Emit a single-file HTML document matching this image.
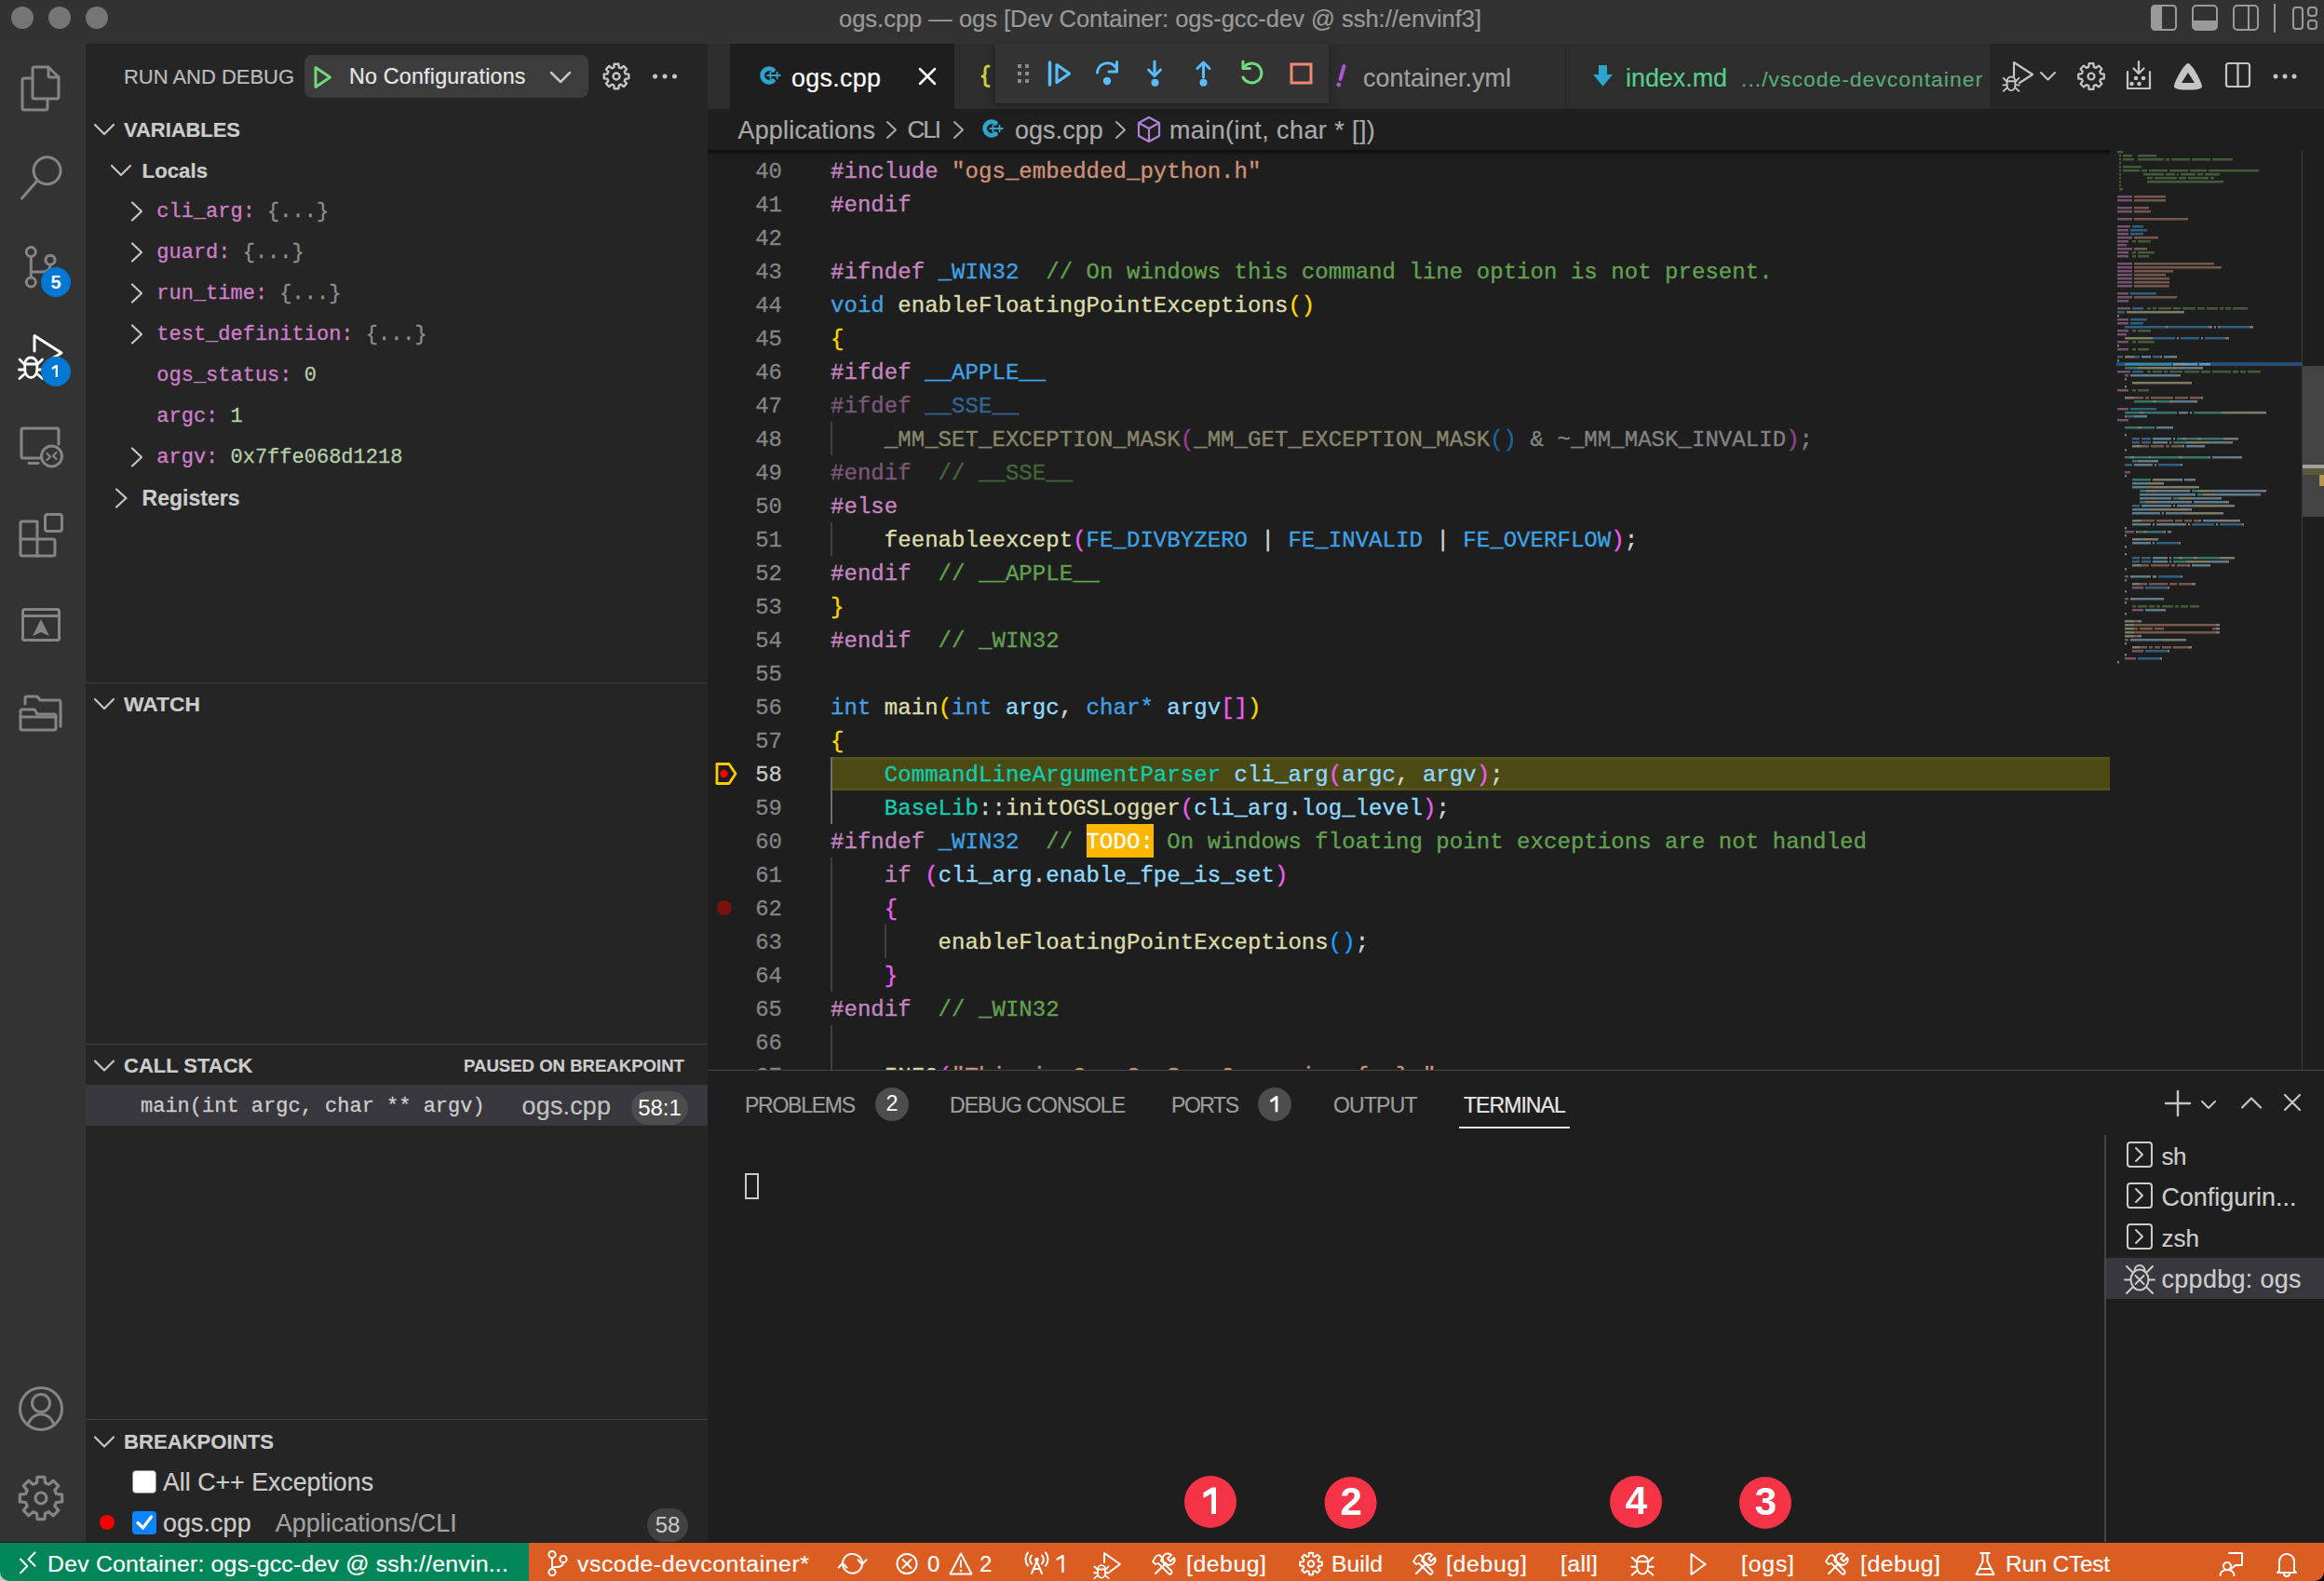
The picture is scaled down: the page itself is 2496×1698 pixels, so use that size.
<!DOCTYPE html><html><head><meta charset="utf-8"><style>html,body{margin:0;padding:0;}body{width:2496px;height:1698px;position:relative;overflow:hidden;background:#1e1e1e;font-family:"Liberation Sans",sans-serif;}</style></head><body><div style="position:absolute;left:0px;top:0px;width:2496px;height:47px;background:#323232;"></div>
<div style="position:absolute;left:901px;top:1.40px;height:38px;line-height:38px;font-family:'Liberation Sans', sans-serif;font-size:25.50px;font-weight:400;color:#9a9a9a;white-space:pre;letter-spacing:-0.010px;-webkit-text-stroke:0.2px;">ogs.cpp — ogs [Dev Container: ogs-gcc-dev @ ssh://envinf3]</div>
<div style="position:absolute;left:0px;top:47px;width:92px;height:1610px;background:#333333;"></div>
<div style="position:absolute;left:92px;top:47px;width:668px;height:1610px;background:#252526;"></div>
<div style="position:absolute;left:133px;top:65.70px;height:33px;line-height:33px;font-family:'Liberation Sans', sans-serif;font-size:22.00px;font-weight:400;color:#bbbbbb;white-space:pre;letter-spacing:-0.030px;-webkit-text-stroke:0.2px;">RUN AND DEBUG</div>
<div style="position:absolute;left:327px;top:59px;width:305px;height:46px;background:#3c3c3c;border-radius:8px;"></div>
<div style="position:absolute;left:375px;top:65.40px;height:35px;line-height:35px;font-family:'Liberation Sans', sans-serif;font-size:23.29px;font-weight:400;color:#e6e6e6;white-space:pre;letter-spacing:0.194px;-webkit-text-stroke:0.2px;">No Configurations</div>
<div style="position:absolute;left:133px;top:122.50px;height:33px;line-height:33px;font-family:'Liberation Sans', sans-serif;font-size:22.00px;font-weight:700;color:#cccccc;white-space:pre;letter-spacing:-0.062px;-webkit-text-stroke:0.2px;">VARIABLES</div>
<div style="position:absolute;left:152.6px;top:166.50px;height:33px;line-height:33px;font-family:'Liberation Sans', sans-serif;font-size:22.22px;font-weight:700;color:#cccccc;white-space:pre;-webkit-text-stroke:0.2px;">Locals</div>
<div style="position:absolute;left:168.3px;top:211.00px;height:33px;line-height:33px;font-family:'Liberation Mono', monospace;font-size:22px;font-weight:400;white-space:pre;-webkit-text-stroke:0.3px;"><span style="color:#cf7fca">cli_arg:</span><span style="color:#8f8f8f"> {...}</span></div>
<div style="position:absolute;left:168.3px;top:255.00px;height:33px;line-height:33px;font-family:'Liberation Mono', monospace;font-size:22px;font-weight:400;white-space:pre;-webkit-text-stroke:0.3px;"><span style="color:#cf7fca">guard:</span><span style="color:#8f8f8f"> {...}</span></div>
<div style="position:absolute;left:168.3px;top:299.00px;height:33px;line-height:33px;font-family:'Liberation Mono', monospace;font-size:22px;font-weight:400;white-space:pre;-webkit-text-stroke:0.3px;"><span style="color:#cf7fca">run_time:</span><span style="color:#8f8f8f"> {...}</span></div>
<div style="position:absolute;left:168.3px;top:343.00px;height:33px;line-height:33px;font-family:'Liberation Mono', monospace;font-size:22px;font-weight:400;white-space:pre;-webkit-text-stroke:0.3px;"><span style="color:#cf7fca">test_definition:</span><span style="color:#8f8f8f"> {...}</span></div>
<div style="position:absolute;left:168.3px;top:387.00px;height:33px;line-height:33px;font-family:'Liberation Mono', monospace;font-size:22px;font-weight:400;white-space:pre;-webkit-text-stroke:0.3px;"><span style="color:#cf7fca">ogs_status:</span><span style="color:#b5cea8"> 0</span></div>
<div style="position:absolute;left:168.3px;top:431.00px;height:33px;line-height:33px;font-family:'Liberation Mono', monospace;font-size:22px;font-weight:400;white-space:pre;-webkit-text-stroke:0.3px;"><span style="color:#cf7fca">argc:</span><span style="color:#b5cea8"> 1</span></div>
<div style="position:absolute;left:168.3px;top:475.00px;height:33px;line-height:33px;font-family:'Liberation Mono', monospace;font-size:22px;font-weight:400;white-space:pre;-webkit-text-stroke:0.3px;"><span style="color:#cf7fca">argv:</span><span style="color:#b5cea8"> 0x7ffe068d1218</span></div>
<div style="position:absolute;left:152.6px;top:518.00px;height:34px;line-height:34px;font-family:'Liberation Sans', sans-serif;font-size:23.00px;font-weight:700;color:#cccccc;white-space:pre;-webkit-text-stroke:0.2px;">Registers</div>
<div style="position:absolute;left:92px;top:733px;width:668px;height:1px;background:#3f3f3f;"></div>
<div style="position:absolute;left:133px;top:739.00px;height:34px;line-height:34px;font-family:'Liberation Sans', sans-serif;font-size:22.77px;font-weight:700;color:#cccccc;white-space:pre;letter-spacing:0.053px;-webkit-text-stroke:0.2px;">WATCH</div>
<div style="position:absolute;left:92px;top:1121px;width:668px;height:1px;background:#3f3f3f;"></div>
<div style="position:absolute;left:133px;top:1128.00px;height:33px;line-height:33px;font-family:'Liberation Sans', sans-serif;font-size:22.00px;font-weight:700;color:#cccccc;white-space:pre;letter-spacing:-0.012px;-webkit-text-stroke:0.2px;">CALL STACK</div>
<div style="position:absolute;left:498px;top:1130.70px;height:28px;line-height:28px;font-family:'Liberation Sans', sans-serif;font-size:18.60px;font-weight:700;color:#cccccc;white-space:pre;letter-spacing:-0.018px;-webkit-text-stroke:0.2px;">PAUSED ON BREAKPOINT</div>
<div style="position:absolute;left:92px;top:1165px;width:668px;height:44px;background:#37373d;"></div>
<div style="position:absolute;left:151px;top:1171.50px;height:33px;line-height:33px;font-family:'Liberation Mono', monospace;font-size:22.00px;font-weight:400;color:#cccccc;white-space:pre;-webkit-text-stroke:0.3px;">main(int argc, char ** argv)</div>
<div style="position:absolute;left:560.6px;top:1168.00px;height:40px;line-height:40px;font-family:'Liberation Sans', sans-serif;font-size:26.91px;font-weight:400;color:#c2c2c2;white-space:pre;letter-spacing:0.193px;-webkit-text-stroke:0.2px;">ogs.cpp</div>
<div style="position:absolute;left:678px;top:1172px;width:61px;height:36px;background:#4d4d4d;border-radius:18px;"></div>
<div style="position:absolute;left:678px;width:61px;text-align:center;top:1172.00px;height:36px;line-height:36px;font-family:'Liberation Sans', sans-serif;font-size:24px;font-weight:400;color:#ffffff;white-space:pre;">58:1</div>
<div style="position:absolute;left:92px;top:1524px;width:668px;height:1px;background:#3f3f3f;"></div>
<div style="position:absolute;left:133px;top:1532.00px;height:33px;line-height:33px;font-family:'Liberation Sans', sans-serif;font-size:22.12px;font-weight:700;color:#cccccc;white-space:pre;-webkit-text-stroke:0.2px;">BREAKPOINTS</div>
<div style="position:absolute;left:142px;top:1579px;width:26px;height:25px;background:#ffffff;border-radius:4px;box-sizing:border-box;border:1.5px solid #8a8a8a;"></div>
<div style="position:absolute;left:175px;top:1572.00px;height:40px;line-height:40px;font-family:'Liberation Sans', sans-serif;font-size:26.75px;font-weight:400;color:#cccccc;white-space:pre;-webkit-text-stroke:0.2px;">All C++ Exceptions</div>
<div style="position:absolute;left:142px;top:1623px;width:26px;height:25px;background:#0a84ff;border-radius:4px;"></div>
<div style="position:absolute;left:175px;top:1616.00px;height:40px;line-height:40px;font-family:'Liberation Sans', sans-serif;font-size:26.91px;font-weight:400;color:#cccccc;white-space:pre;letter-spacing:0.059px;-webkit-text-stroke:0.2px;">ogs.cpp</div>
<div style="position:absolute;left:295.7px;top:1616.00px;height:40px;line-height:40px;font-family:'Liberation Sans', sans-serif;font-size:26.91px;font-weight:400;color:#a0a0a0;white-space:pre;letter-spacing:0.037px;-webkit-text-stroke:0.2px;">Applications/CLI</div>
<div style="position:absolute;left:695px;top:1620px;width:44px;height:36px;background:#414141;border-radius:18px;"></div>
<div style="position:absolute;left:695px;width:44px;text-align:center;top:1620.00px;height:36px;line-height:36px;font-family:'Liberation Sans', sans-serif;font-size:24px;font-weight:400;color:#cccccc;white-space:pre;">58</div>
<div style="position:absolute;left:760px;top:47px;width:1736px;height:70px;background:#252526;"></div>
<div style="position:absolute;left:760px;top:47px;width:24px;height:70px;background:#2d2d2d;"></div>
<div style="position:absolute;left:784px;top:47px;width:241px;height:70px;background:#1e1e1e;"></div>
<div style="position:absolute;left:850px;top:63.50px;height:40px;line-height:40px;font-family:'Liberation Sans', sans-serif;font-size:26.91px;font-weight:400;color:#ffffff;white-space:pre;letter-spacing:0.293px;-webkit-text-stroke:0.2px;">ogs.cpp</div>
<div style="position:absolute;left:1025px;top:47px;width:385px;height:70px;background:#2d2d2d;"></div>
<div style="position:absolute;left:1410px;top:47px;width:271px;height:70px;background:#2d2d2d;"></div>
<div style="position:absolute;left:1464px;top:63.50px;height:40px;line-height:40px;font-family:'Liberation Sans', sans-serif;font-size:26.91px;font-weight:400;color:#a0a0a0;white-space:pre;letter-spacing:0.039px;-webkit-text-stroke:0.2px;">container.yml</div>
<div style="position:absolute;left:1682px;top:47px;width:455px;height:70px;background:#2d2d2d;"></div>
<div style="position:absolute;left:1746px;top:63.50px;height:40px;line-height:40px;font-family:'Liberation Sans', sans-serif;font-size:26.86px;font-weight:400;color:#58cc8c;white-space:pre;-webkit-text-stroke:0.2px;">index.md</div>
<div style="position:absolute;left:1870px;top:67.50px;height:34px;line-height:34px;font-family:'Liberation Sans', sans-serif;font-size:22.77px;font-weight:400;color:#5aa87a;white-space:pre;letter-spacing:1.073px;-webkit-text-stroke:0.2px;">.../vscode-devcontainer</div>
<div style="position:absolute;left:760px;top:117px;width:1736px;height:44px;background:#1e1e1e;"></div>
<div style="position:absolute;left:792.5px;top:119.50px;height:40px;line-height:40px;font-family:'Liberation Sans', sans-serif;font-size:26.91px;font-weight:400;color:#a9a9a9;white-space:pre;letter-spacing:0.219px;-webkit-text-stroke:0.2px;">Applications</div>
<div style="position:absolute;left:974.5px;top:120.00px;height:39px;line-height:39px;font-family:'Liberation Sans', sans-serif;font-size:26.00px;font-weight:400;color:#a9a9a9;white-space:pre;letter-spacing:-1.979px;-webkit-text-stroke:0.2px;">CLI</div>
<div style="position:absolute;left:1090px;top:119.50px;height:40px;line-height:40px;font-family:'Liberation Sans', sans-serif;font-size:26.91px;font-weight:400;color:#a9a9a9;white-space:pre;letter-spacing:0.076px;-webkit-text-stroke:0.2px;">ogs.cpp</div>
<div style="position:absolute;left:1256px;top:119.50px;height:40px;line-height:40px;font-family:'Liberation Sans', sans-serif;font-size:26.91px;font-weight:400;color:#a9a9a9;white-space:pre;letter-spacing:0.445px;-webkit-text-stroke:0.2px;">main(int, char * [])</div>
<div style="position:absolute;left:1069px;top:47px;width:358px;height:64px;background:#333333;box-shadow:0 2px 8px rgba(0,0,0,0.36);"></div>
<div style="position:absolute;left:760px;top:1149px;width:1736px;height:1px;background:#454545;"></div>
<div style="position:absolute;left:760px;top:1150px;width:1736px;height:507px;background:#1e1e1e;"></div>
<div style="position:absolute;left:800px;top:1169.50px;height:34px;line-height:34px;font-family:'Liberation Sans', sans-serif;font-size:23.00px;font-weight:400;color:#9d9d9d;white-space:pre;letter-spacing:-1.259px;-webkit-text-stroke:0.2px;">PROBLEMS</div>
<div style="position:absolute;left:940px;top:1168px;width:36px;height:36px;background:#4d4d4d;border-radius:18px;"></div>
<div style="position:absolute;left:940px;width:36px;text-align:center;top:1168.00px;height:35px;line-height:35px;font-family:'Liberation Sans', sans-serif;font-size:23.5px;font-weight:400;color:#ffffff;white-space:pre;">2</div>
<div style="position:absolute;left:1020px;top:1169.50px;height:34px;line-height:34px;font-family:'Liberation Sans', sans-serif;font-size:23.00px;font-weight:400;color:#9d9d9d;white-space:pre;letter-spacing:-0.971px;-webkit-text-stroke:0.2px;">DEBUG CONSOLE</div>
<div style="position:absolute;left:1258px;top:1169.50px;height:34px;line-height:34px;font-family:'Liberation Sans', sans-serif;font-size:23.00px;font-weight:400;color:#9d9d9d;white-space:pre;letter-spacing:-1.454px;-webkit-text-stroke:0.2px;">PORTS</div>
<div style="position:absolute;left:1351px;top:1168px;width:36px;height:36px;background:#4d4d4d;border-radius:18px;"></div>
<div style="position:absolute;left:1432px;top:1169.50px;height:34px;line-height:34px;font-family:'Liberation Sans', sans-serif;font-size:23.00px;font-weight:400;color:#9d9d9d;white-space:pre;letter-spacing:-0.810px;-webkit-text-stroke:0.2px;">OUTPUT</div>
<div style="position:absolute;left:1572px;top:1169.50px;height:34px;line-height:34px;font-family:'Liberation Sans', sans-serif;font-size:23.00px;font-weight:400;color:#e7e7e7;white-space:pre;letter-spacing:-0.941px;-webkit-text-stroke:0.2px;">TERMINAL</div>
<div style="position:absolute;left:1567px;top:1210px;width:119px;height:2px;background:#e7e7e7;"></div>
<div style="position:absolute;left:2260px;top:1219px;width:2px;height:438px;background:#454545;"></div>
<div style="position:absolute;left:2262px;top:1351px;width:234px;height:44px;background:#37373d;"></div>
<div style="position:absolute;left:2321.5px;top:1222.50px;height:39px;line-height:39px;font-family:'Liberation Sans', sans-serif;font-size:26.00px;font-weight:400;color:#cccccc;white-space:pre;letter-spacing:-0.458px;-webkit-text-stroke:0.2px;">sh</div>
<div style="position:absolute;left:2321.5px;top:1266.00px;height:40px;line-height:40px;font-family:'Liberation Sans', sans-serif;font-size:26.88px;font-weight:400;color:#cccccc;white-space:pre;-webkit-text-stroke:0.2px;">Configurin...</div>
<div style="position:absolute;left:2321.5px;top:1310.50px;height:39px;line-height:39px;font-family:'Liberation Sans', sans-serif;font-size:26.03px;font-weight:400;color:#cccccc;white-space:pre;-webkit-text-stroke:0.2px;">zsh</div>
<div style="position:absolute;left:2321.5px;top:1354.00px;height:40px;line-height:40px;font-family:'Liberation Sans', sans-serif;font-size:26.91px;font-weight:400;color:#cccccc;white-space:pre;letter-spacing:0.339px;-webkit-text-stroke:0.2px;">cppdbg: ogs</div>
<div style="position:absolute;left:0px;top:1656px;width:2496px;height:1px;background:#1b1f23;"></div>
<div style="position:absolute;left:0px;top:1657px;width:2496px;height:41px;background:#dc5d22;"></div>
<div style="position:absolute;left:0px;top:1657px;width:568px;height:41px;background:#008659;"></div>
<div style="position:absolute;left:51px;top:1661.20px;height:37px;line-height:37px;font-family:'Liberation Sans', sans-serif;font-size:24.84px;font-weight:400;color:#ffffff;white-space:pre;letter-spacing:0.207px;-webkit-text-stroke:0.2px;">Dev Container: ogs-gcc-dev @ ssh://envin...</div>
<div style="position:absolute;left:620px;top:1661.20px;height:37px;line-height:37px;font-family:'Liberation Sans', sans-serif;font-size:24.84px;font-weight:400;color:#ffffff;white-space:pre;letter-spacing:0.533px;-webkit-text-stroke:0.2px;">vscode-devcontainer*</div>
<div style="position:absolute;left:996px;top:1661.70px;height:36px;line-height:36px;font-family:'Liberation Sans', sans-serif;font-size:24.00px;font-weight:400;color:#ffffff;white-space:pre;-webkit-text-stroke:0.2px;">0</div>
<div style="position:absolute;left:1052px;top:1661.70px;height:36px;line-height:36px;font-family:'Liberation Sans', sans-serif;font-size:24.00px;font-weight:400;color:#ffffff;white-space:pre;-webkit-text-stroke:0.2px;">2</div>
<div style="position:absolute;left:1274px;top:1661.20px;height:37px;line-height:37px;font-family:'Liberation Sans', sans-serif;font-size:24.84px;font-weight:400;color:#ffffff;white-space:pre;letter-spacing:0.522px;-webkit-text-stroke:0.2px;">[debug]</div>
<div style="position:absolute;left:1430px;top:1661.20px;height:37px;line-height:37px;font-family:'Liberation Sans', sans-serif;font-size:24.73px;font-weight:400;color:#ffffff;white-space:pre;-webkit-text-stroke:0.2px;">Build</div>
<div style="position:absolute;left:1553px;top:1661.20px;height:37px;line-height:37px;font-family:'Liberation Sans', sans-serif;font-size:24.84px;font-weight:400;color:#ffffff;white-space:pre;letter-spacing:0.689px;-webkit-text-stroke:0.2px;">[debug]</div>
<div style="position:absolute;left:1676px;top:1661.20px;height:37px;line-height:37px;font-family:'Liberation Sans', sans-serif;font-size:24.84px;font-weight:400;color:#ffffff;white-space:pre;letter-spacing:0.337px;-webkit-text-stroke:0.2px;">[all]</div>
<div style="position:absolute;left:1870px;top:1661.20px;height:37px;line-height:37px;font-family:'Liberation Sans', sans-serif;font-size:24.84px;font-weight:400;color:#ffffff;white-space:pre;letter-spacing:0.788px;-webkit-text-stroke:0.2px;">[ogs]</div>
<div style="position:absolute;left:1998px;top:1661.20px;height:37px;line-height:37px;font-family:'Liberation Sans', sans-serif;font-size:24.84px;font-weight:400;color:#ffffff;white-space:pre;letter-spacing:0.522px;-webkit-text-stroke:0.2px;">[debug]</div>
<div style="position:absolute;left:2154px;top:1661.20px;height:37px;line-height:37px;font-family:'Liberation Sans', sans-serif;font-size:24.50px;font-weight:400;color:#ffffff;white-space:pre;letter-spacing:-0.297px;-webkit-text-stroke:0.2px;">Run CTest</div>
<div style="position:absolute;left:760px;top:161px;width:1736px;height:988px;background:#1e1e1e;"></div>
<div style="position:absolute;left:892px;top:813px;width:1374px;height:36px;background:#4b4a12;box-sizing:border-box;border-top:3px solid #55531c;border-bottom:3px solid #55531c;"></div>
<div style="position:absolute;left:892px;top:453px;width:2px;height:36px;background:#404040;"></div>
<div style="position:absolute;left:892px;top:561px;width:2px;height:36px;background:#404040;"></div>
<div style="position:absolute;left:892px;top:813px;width:2px;height:72px;background:#707070;"></div>
<div style="position:absolute;left:892px;top:921px;width:2px;height:144px;background:#404040;"></div>
<div style="position:absolute;left:950px;top:993px;width:2px;height:36px;background:#404040;"></div>
<div style="position:absolute;left:892px;top:1101px;width:2px;height:48px;background:#404040;"></div>
<div style="position:absolute;left:1166.5px;top:885px;width:72.5px;height:36px;background:#fdb700;"></div>
<div style="position:absolute;left:760px;top:161px;width:1506px;height:988px;overflow:hidden;">
<div style="position:absolute;left:51.2px;top:6.20px;height:36px;line-height:36px;font-family:'Liberation Mono',monospace;font-size:24px;color:#858585;white-space:pre;-webkit-text-stroke:0.3px">40</div>
<div style="position:absolute;left:132px;top:6.20px;height:36px;line-height:36px;font-family:'Liberation Mono',monospace;font-size:24px;white-space:pre;letter-spacing:0.05px;-webkit-text-stroke:0.35px;"><span style="color:#c586c0">#include </span><span style="color:#ce9178">"ogs_embedded_python.h"</span></div>
<div style="position:absolute;left:51.2px;top:42.20px;height:36px;line-height:36px;font-family:'Liberation Mono',monospace;font-size:24px;color:#858585;white-space:pre;-webkit-text-stroke:0.3px">41</div>
<div style="position:absolute;left:132px;top:42.20px;height:36px;line-height:36px;font-family:'Liberation Mono',monospace;font-size:24px;white-space:pre;letter-spacing:0.05px;-webkit-text-stroke:0.35px;"><span style="color:#c586c0">#endif</span></div>
<div style="position:absolute;left:51.2px;top:78.20px;height:36px;line-height:36px;font-family:'Liberation Mono',monospace;font-size:24px;color:#858585;white-space:pre;-webkit-text-stroke:0.3px">42</div>
<div style="position:absolute;left:51.2px;top:114.20px;height:36px;line-height:36px;font-family:'Liberation Mono',monospace;font-size:24px;color:#858585;white-space:pre;-webkit-text-stroke:0.3px">43</div>
<div style="position:absolute;left:132px;top:114.20px;height:36px;line-height:36px;font-family:'Liberation Mono',monospace;font-size:24px;white-space:pre;letter-spacing:0.05px;-webkit-text-stroke:0.35px;"><span style="color:#c586c0">#ifndef </span><span style="color:#3ea2e4">_WIN32</span><span style="color:#62a150">  // On windows this command line option is not present.</span></div>
<div style="position:absolute;left:51.2px;top:150.20px;height:36px;line-height:36px;font-family:'Liberation Mono',monospace;font-size:24px;color:#858585;white-space:pre;-webkit-text-stroke:0.3px">44</div>
<div style="position:absolute;left:132px;top:150.20px;height:36px;line-height:36px;font-family:'Liberation Mono',monospace;font-size:24px;white-space:pre;letter-spacing:0.05px;-webkit-text-stroke:0.35px;"><span style="color:#44a0e4">void </span><span style="color:#dcdcaa">enableFloatingPointExceptions</span><span style="color:#ffd700">()</span></div>
<div style="position:absolute;left:51.2px;top:186.20px;height:36px;line-height:36px;font-family:'Liberation Mono',monospace;font-size:24px;color:#858585;white-space:pre;-webkit-text-stroke:0.3px">45</div>
<div style="position:absolute;left:132px;top:186.20px;height:36px;line-height:36px;font-family:'Liberation Mono',monospace;font-size:24px;white-space:pre;letter-spacing:0.05px;-webkit-text-stroke:0.35px;"><span style="color:#ffd700">{</span></div>
<div style="position:absolute;left:51.2px;top:222.20px;height:36px;line-height:36px;font-family:'Liberation Mono',monospace;font-size:24px;color:#858585;white-space:pre;-webkit-text-stroke:0.3px">46</div>
<div style="position:absolute;left:132px;top:222.20px;height:36px;line-height:36px;font-family:'Liberation Mono',monospace;font-size:24px;white-space:pre;letter-spacing:0.05px;-webkit-text-stroke:0.35px;"><span style="color:#c586c0">#ifdef </span><span style="color:#3ea2e4">__APPLE__</span></div>
<div style="position:absolute;left:51.2px;top:258.20px;height:36px;line-height:36px;font-family:'Liberation Mono',monospace;font-size:24px;color:#858585;white-space:pre;-webkit-text-stroke:0.3px">47</div>
<div style="position:absolute;left:132px;top:258.20px;height:36px;line-height:36px;font-family:'Liberation Mono',monospace;font-size:24px;white-space:pre;letter-spacing:0.05px;-webkit-text-stroke:0.35px;opacity:0.55;"><span style="color:#c586c0">#ifdef </span><span style="color:#3ea2e4">__SSE__</span></div>
<div style="position:absolute;left:51.2px;top:294.20px;height:36px;line-height:36px;font-family:'Liberation Mono',monospace;font-size:24px;color:#858585;white-space:pre;-webkit-text-stroke:0.3px">48</div>
<div style="position:absolute;left:132px;top:294.20px;height:36px;line-height:36px;font-family:'Liberation Mono',monospace;font-size:24px;white-space:pre;letter-spacing:0.05px;-webkit-text-stroke:0.35px;opacity:0.55;"><span style="color:#dcdcaa">    _MM_SET_EXCEPTION_MASK</span><span style="color:#ee5fec">(</span><span style="color:#dcdcaa">_MM_GET_EXCEPTION_MASK</span><span style="color:#179fff">()</span><span style="color:#d4d4d4"> &amp; ~_MM_MASK_INVALID</span><span style="color:#ee5fec">)</span><span style="color:#d4d4d4">;</span></div>
<div style="position:absolute;left:51.2px;top:330.20px;height:36px;line-height:36px;font-family:'Liberation Mono',monospace;font-size:24px;color:#858585;white-space:pre;-webkit-text-stroke:0.3px">49</div>
<div style="position:absolute;left:132px;top:330.20px;height:36px;line-height:36px;font-family:'Liberation Mono',monospace;font-size:24px;white-space:pre;letter-spacing:0.05px;-webkit-text-stroke:0.35px;opacity:0.55;"><span style="color:#c586c0">#endif</span><span style="color:#62a150">  // __SSE__</span></div>
<div style="position:absolute;left:51.2px;top:366.20px;height:36px;line-height:36px;font-family:'Liberation Mono',monospace;font-size:24px;color:#858585;white-space:pre;-webkit-text-stroke:0.3px">50</div>
<div style="position:absolute;left:132px;top:366.20px;height:36px;line-height:36px;font-family:'Liberation Mono',monospace;font-size:24px;white-space:pre;letter-spacing:0.05px;-webkit-text-stroke:0.35px;"><span style="color:#c586c0">#else</span></div>
<div style="position:absolute;left:51.2px;top:402.20px;height:36px;line-height:36px;font-family:'Liberation Mono',monospace;font-size:24px;color:#858585;white-space:pre;-webkit-text-stroke:0.3px">51</div>
<div style="position:absolute;left:132px;top:402.20px;height:36px;line-height:36px;font-family:'Liberation Mono',monospace;font-size:24px;white-space:pre;letter-spacing:0.05px;-webkit-text-stroke:0.35px;"><span style="color:#dcdcaa">    feenableexcept</span><span style="color:#ee5fec">(</span><span style="color:#3ea2e4">FE_DIVBYZERO</span><span style="color:#d4d4d4"> | </span><span style="color:#3ea2e4">FE_INVALID</span><span style="color:#d4d4d4"> | </span><span style="color:#3ea2e4">FE_OVERFLOW</span><span style="color:#ee5fec">)</span><span style="color:#d4d4d4">;</span></div>
<div style="position:absolute;left:51.2px;top:438.20px;height:36px;line-height:36px;font-family:'Liberation Mono',monospace;font-size:24px;color:#858585;white-space:pre;-webkit-text-stroke:0.3px">52</div>
<div style="position:absolute;left:132px;top:438.20px;height:36px;line-height:36px;font-family:'Liberation Mono',monospace;font-size:24px;white-space:pre;letter-spacing:0.05px;-webkit-text-stroke:0.35px;"><span style="color:#c586c0">#endif</span><span style="color:#62a150">  // __APPLE__</span></div>
<div style="position:absolute;left:51.2px;top:474.20px;height:36px;line-height:36px;font-family:'Liberation Mono',monospace;font-size:24px;color:#858585;white-space:pre;-webkit-text-stroke:0.3px">53</div>
<div style="position:absolute;left:132px;top:474.20px;height:36px;line-height:36px;font-family:'Liberation Mono',monospace;font-size:24px;white-space:pre;letter-spacing:0.05px;-webkit-text-stroke:0.35px;"><span style="color:#ffd700">}</span></div>
<div style="position:absolute;left:51.2px;top:510.20px;height:36px;line-height:36px;font-family:'Liberation Mono',monospace;font-size:24px;color:#858585;white-space:pre;-webkit-text-stroke:0.3px">54</div>
<div style="position:absolute;left:132px;top:510.20px;height:36px;line-height:36px;font-family:'Liberation Mono',monospace;font-size:24px;white-space:pre;letter-spacing:0.05px;-webkit-text-stroke:0.35px;"><span style="color:#c586c0">#endif</span><span style="color:#62a150">  // _WIN32</span></div>
<div style="position:absolute;left:51.2px;top:546.20px;height:36px;line-height:36px;font-family:'Liberation Mono',monospace;font-size:24px;color:#858585;white-space:pre;-webkit-text-stroke:0.3px">55</div>
<div style="position:absolute;left:51.2px;top:582.20px;height:36px;line-height:36px;font-family:'Liberation Mono',monospace;font-size:24px;color:#858585;white-space:pre;-webkit-text-stroke:0.3px">56</div>
<div style="position:absolute;left:132px;top:582.20px;height:36px;line-height:36px;font-family:'Liberation Mono',monospace;font-size:24px;white-space:pre;letter-spacing:0.05px;-webkit-text-stroke:0.35px;"><span style="color:#44a0e4">int </span><span style="color:#dcdcaa">main</span><span style="color:#ffd700">(</span><span style="color:#44a0e4">int </span><span style="color:#8fd9ff">argc</span><span style="color:#d4d4d4">, </span><span style="color:#44a0e4">char</span><span style="color:#44a0e4">*</span><span style="color:#8fd9ff"> argv</span><span style="color:#ee5fec">[]</span><span style="color:#ffd700">)</span></div>
<div style="position:absolute;left:51.2px;top:618.20px;height:36px;line-height:36px;font-family:'Liberation Mono',monospace;font-size:24px;color:#858585;white-space:pre;-webkit-text-stroke:0.3px">57</div>
<div style="position:absolute;left:132px;top:618.20px;height:36px;line-height:36px;font-family:'Liberation Mono',monospace;font-size:24px;white-space:pre;letter-spacing:0.05px;-webkit-text-stroke:0.35px;"><span style="color:#ffd700">{</span></div>
<div style="position:absolute;left:51.2px;top:654.20px;height:36px;line-height:36px;font-family:'Liberation Mono',monospace;font-size:24px;color:#c6c6c6;white-space:pre;-webkit-text-stroke:0.3px">58</div>
<div style="position:absolute;left:132px;top:654.20px;height:36px;line-height:36px;font-family:'Liberation Mono',monospace;font-size:24px;white-space:pre;letter-spacing:0.05px;-webkit-text-stroke:0.35px;"><span style="color:#10cdb0">    CommandLineArgumentParser </span><span style="color:#8fd9ff">cli_arg</span><span style="color:#ee5fec">(</span><span style="color:#8fd9ff">argc</span><span style="color:#d4d4d4">, </span><span style="color:#8fd9ff">argv</span><span style="color:#ee5fec">)</span><span style="color:#d4d4d4">;</span></div>
<div style="position:absolute;left:51.2px;top:690.20px;height:36px;line-height:36px;font-family:'Liberation Mono',monospace;font-size:24px;color:#858585;white-space:pre;-webkit-text-stroke:0.3px">59</div>
<div style="position:absolute;left:132px;top:690.20px;height:36px;line-height:36px;font-family:'Liberation Mono',monospace;font-size:24px;white-space:pre;letter-spacing:0.05px;-webkit-text-stroke:0.35px;"><span style="color:#10cdb0">    BaseLib</span><span style="color:#d4d4d4">::</span><span style="color:#dcdcaa">initOGSLogger</span><span style="color:#ee5fec">(</span><span style="color:#8fd9ff">cli_arg</span><span style="color:#d4d4d4">.</span><span style="color:#8fd9ff">log_level</span><span style="color:#ee5fec">)</span><span style="color:#d4d4d4">;</span></div>
<div style="position:absolute;left:51.2px;top:726.20px;height:36px;line-height:36px;font-family:'Liberation Mono',monospace;font-size:24px;color:#858585;white-space:pre;-webkit-text-stroke:0.3px">60</div>
<div style="position:absolute;left:132px;top:726.20px;height:36px;line-height:36px;font-family:'Liberation Mono',monospace;font-size:24px;white-space:pre;letter-spacing:0.05px;-webkit-text-stroke:0.35px;"><span style="color:#c586c0">#ifndef </span><span style="color:#3ea2e4">_WIN32</span><span style="color:#62a150">  // </span><span style="color:#ffffff">TODO:</span><span style="color:#62a150"> On windows floating point exceptions are not handled</span></div>
<div style="position:absolute;left:51.2px;top:762.20px;height:36px;line-height:36px;font-family:'Liberation Mono',monospace;font-size:24px;color:#858585;white-space:pre;-webkit-text-stroke:0.3px">61</div>
<div style="position:absolute;left:132px;top:762.20px;height:36px;line-height:36px;font-family:'Liberation Mono',monospace;font-size:24px;white-space:pre;letter-spacing:0.05px;-webkit-text-stroke:0.35px;"><span style="color:#c586c0">    if </span><span style="color:#ee5fec">(</span><span style="color:#8fd9ff">cli_arg</span><span style="color:#d4d4d4">.</span><span style="color:#8fd9ff">enable_fpe_is_set</span><span style="color:#ee5fec">)</span></div>
<div style="position:absolute;left:51.2px;top:798.20px;height:36px;line-height:36px;font-family:'Liberation Mono',monospace;font-size:24px;color:#858585;white-space:pre;-webkit-text-stroke:0.3px">62</div>
<div style="position:absolute;left:132px;top:798.20px;height:36px;line-height:36px;font-family:'Liberation Mono',monospace;font-size:24px;white-space:pre;letter-spacing:0.05px;-webkit-text-stroke:0.35px;"><span style="color:#ee5fec">    {</span></div>
<div style="position:absolute;left:51.2px;top:834.20px;height:36px;line-height:36px;font-family:'Liberation Mono',monospace;font-size:24px;color:#858585;white-space:pre;-webkit-text-stroke:0.3px">63</div>
<div style="position:absolute;left:132px;top:834.20px;height:36px;line-height:36px;font-family:'Liberation Mono',monospace;font-size:24px;white-space:pre;letter-spacing:0.05px;-webkit-text-stroke:0.35px;"><span style="color:#dcdcaa">        enableFloatingPointExceptions</span><span style="color:#179fff">()</span><span style="color:#d4d4d4">;</span></div>
<div style="position:absolute;left:51.2px;top:870.20px;height:36px;line-height:36px;font-family:'Liberation Mono',monospace;font-size:24px;color:#858585;white-space:pre;-webkit-text-stroke:0.3px">64</div>
<div style="position:absolute;left:132px;top:870.20px;height:36px;line-height:36px;font-family:'Liberation Mono',monospace;font-size:24px;white-space:pre;letter-spacing:0.05px;-webkit-text-stroke:0.35px;"><span style="color:#ee5fec">    }</span></div>
<div style="position:absolute;left:51.2px;top:906.20px;height:36px;line-height:36px;font-family:'Liberation Mono',monospace;font-size:24px;color:#858585;white-space:pre;-webkit-text-stroke:0.3px">65</div>
<div style="position:absolute;left:132px;top:906.20px;height:36px;line-height:36px;font-family:'Liberation Mono',monospace;font-size:24px;white-space:pre;letter-spacing:0.05px;-webkit-text-stroke:0.35px;"><span style="color:#c586c0">#endif</span><span style="color:#62a150">  // _WIN32</span></div>
<div style="position:absolute;left:51.2px;top:942.20px;height:36px;line-height:36px;font-family:'Liberation Mono',monospace;font-size:24px;color:#858585;white-space:pre;-webkit-text-stroke:0.3px">66</div>
<div style="position:absolute;left:51.2px;top:978.20px;height:36px;line-height:36px;font-family:'Liberation Mono',monospace;font-size:24px;color:#858585;white-space:pre;-webkit-text-stroke:0.3px">67</div>
<div style="position:absolute;left:132px;top:978.20px;height:36px;line-height:36px;font-family:'Liberation Mono',monospace;font-size:24px;white-space:pre;letter-spacing:0.05px;-webkit-text-stroke:0.35px;"><span style="color:#dcdcaa">    INFO</span><span style="color:#ee5fec">(</span><span style="color:#ce9178">"This is OpenGeoSys-6 version {:s}."</span><span style="color:#d4d4d4">,</span></div>
</div>
<div style="position:absolute;left:760px;top:161px;width:1506px;height:6px;background:linear-gradient(rgba(0,0,0,0.55),rgba(0,0,0,0));"></div>
<div style="position:absolute;left:2472px;top:161px;width:1px;height:988px;background:#3a3a3a;"></div>
<div style="position:absolute;left:2473px;top:393px;width:23px;height:162px;background:#434343;"></div>
<div style="position:absolute;left:2473px;top:499px;width:23px;height:4px;background:#a0a0a0;"></div>
<div style="position:absolute;left:2473px;top:503px;width:23px;height:7px;background:#5b5b3c;"></div>
<div style="position:absolute;left:2491px;top:510px;width:5px;height:12px;background:#b39550;"></div><svg style="position:absolute;left:0;top:0" width="2496" height="1698"><circle cx="24" cy="19" r="12" fill="#757575" />
<circle cx="64" cy="19" r="12" fill="#757575" />
<circle cx="104" cy="19" r="12" fill="#757575" />
<rect x="2311" y="6" width="26" height="26" rx="3.5" fill="none" stroke="#9a9a9a" stroke-width="2"/>
<path d="M2315,6 H2322 V32 H2315 a4,4 0 0 1 -4,-4 V10 a4,4 0 0 1 4,-4 Z" fill="#9a9a9a"/>
<rect x="2355" y="6" width="26" height="26" rx="4" fill="none" stroke="#9a9a9a" stroke-width="2"/>
<path d="M2355,22 H2381 V28 a4,4 0 0 1 -4,4 H2359 a4,4 0 0 1 -4,-4 Z" fill="#9a9a9a"/>
<rect x="2399" y="6" width="26" height="26" rx="4" fill="none" stroke="#9a9a9a" stroke-width="2"/>
<path d="M2415,6 V32" stroke="#9a9a9a" stroke-width="2"/>
<path d="M2443,4 V35" stroke="#9a9a9a" stroke-width="2"/>
<rect x="2463" y="8" width="10" height="23" rx="3" fill="none" stroke="#9a9a9a" stroke-width="2"/>
<rect x="2479" y="8" width="9" height="9" rx="3" fill="none" stroke="#9a9a9a" stroke-width="2"/>
<rect x="2479" y="22" width="9" height="9" rx="3" fill="none" stroke="#9a9a9a" stroke-width="2"/>
<path d="M35,74 a2,2 0 0 1 2,-2 H52 L63,83 V104 a2,2 0 0 1 -2,2 H37 a2,2 0 0 1 -2,-2 Z" fill="none" stroke="#858585" stroke-width="3" stroke-linecap="round" stroke-linejoin="round" />
<path d="M52,72 V81 a2,2 0 0 0 2,2 H63" fill="none" stroke="#858585" stroke-width="3" stroke-linecap="round" stroke-linejoin="round" />
<path d="M35,84 H26 a2,2 0 0 0 -2,2 V116 a2,2 0 0 0 2,2 H49 a2,2 0 0 0 2,-2 V106" fill="none" stroke="#858585" stroke-width="3" stroke-linecap="round" stroke-linejoin="round" />
<circle cx="50.6" cy="183.3" r="14.5" fill="none" stroke="#858585" stroke-width="3"/>
<path d="M40,194 L23.5,213" fill="none" stroke="#858585" stroke-width="3" stroke-linecap="round" stroke-linejoin="round" />
<circle cx="33.3" cy="270.5" r="5" fill="none" stroke="#858585" stroke-width="3"/>
<circle cx="54" cy="279.2" r="5" fill="none" stroke="#858585" stroke-width="3"/>
<circle cx="33.3" cy="303" r="5" fill="none" stroke="#858585" stroke-width="3"/>
<path d="M33.3,275.5 V298" fill="none" stroke="#858585" stroke-width="3" stroke-linecap="round" stroke-linejoin="round" />
<path d="M54,284.2 C54,290 50,292 45,292 H33.3" fill="none" stroke="#858585" stroke-width="3" stroke-linecap="round" stroke-linejoin="round" />
<circle cx="60" cy="303" r="16" fill="#0078d4" />
<path d="M37,377 V360.5 L66,379 L53,387" fill="none" stroke="#ffffff" stroke-width="3" stroke-linecap="round" stroke-linejoin="round" />
<path d="M26.75,391.00 A6.50,7.00 0 0 1 39.75,391.00 V397.00 A6.50,8.50 0 0 1 26.75,397.00 Z" fill="none" stroke="#ffffff" stroke-width="2.8" stroke-linecap="round" stroke-linejoin="round" />
<path d="M26.75,391.00 H39.75" fill="none" stroke="#ffffff" stroke-width="2.8" stroke-linecap="round" stroke-linejoin="round" />
<path d="M21.00,386.00 L26.00,391.00" fill="none" stroke="#ffffff" stroke-width="2.8" stroke-linecap="round" stroke-linejoin="round" />
<path d="M20.50,397.00 H26.25" fill="none" stroke="#ffffff" stroke-width="2.8" stroke-linecap="round" stroke-linejoin="round" />
<path d="M21.00,406.50 L26.00,402.00" fill="none" stroke="#ffffff" stroke-width="2.8" stroke-linecap="round" stroke-linejoin="round" />
<path d="M45.50,386.00 L40.50,391.00" fill="none" stroke="#ffffff" stroke-width="2.8" stroke-linecap="round" stroke-linejoin="round" />
<path d="M46.00,397.00 H40.25" fill="none" stroke="#ffffff" stroke-width="2.8" stroke-linecap="round" stroke-linejoin="round" />
<path d="M45.50,406.50 L40.50,402.00" fill="none" stroke="#ffffff" stroke-width="2.8" stroke-linecap="round" stroke-linejoin="round" />
<circle cx="60" cy="399" r="16" fill="#0078d4" />
<path d="M55.80,394.45 L59.93,392.00 H61.93 V404.90 H59.67 V394.97 L55.80,397.16 Z" fill="#ffffff" />
<path d="M43,492 H25 a2,2 0 0 1 -2,-2 V462 a2,2 0 0 1 2,-2 H61 a2,2 0 0 1 2,2 V477" fill="none" stroke="#858585" stroke-width="3" stroke-linecap="round" stroke-linejoin="round" />
<path d="M31,497.5 H41" fill="none" stroke="#858585" stroke-width="3" stroke-linecap="round" stroke-linejoin="round" />
<circle cx="55.5" cy="490" r="11" fill="none" stroke="#858585" stroke-width="3"/>
<path d="M50.5,487 L54,490.5 L50.5,494 M60.5,486 L57,489.5 L60.5,493" fill="none" stroke="#858585" stroke-width="2.2" stroke-linecap="round" stroke-linejoin="round" />
<path d="M22,562 a2,2 0 0 1 2,-2 H40 V597 H24 a2,2 0 0 1 -2,-2 Z" fill="none" stroke="#858585" stroke-width="3" stroke-linecap="round" stroke-linejoin="round" />
<path d="M22,579 H57 a2,2 0 0 1 2,2 V595 a2,2 0 0 1 -2,2 H40" fill="none" stroke="#858585" stroke-width="3" stroke-linecap="round" stroke-linejoin="round" />
<rect x="48.5" y="552.5" width="18" height="18" rx="2.5" fill="none" stroke="#858585" stroke-width="3"/>
<rect x="24.5" y="654.5" width="39" height="33" rx="2" fill="none" stroke="#858585" stroke-width="3"/>
<path d="M24.5,661.5 H63.5" fill="none" stroke="#858585" stroke-width="3" stroke-linecap="round" stroke-linejoin="round" />
<path d="M44,665 L53,683 L44,679 L35,683 Z" fill="#858585" />
<path d="M27,756 V750 a2,2 0 0 1 2,-2 H40 l3,4 H63 a2,2 0 0 1 2,2 V780" fill="none" stroke="#858585" stroke-width="3" stroke-linecap="round" stroke-linejoin="round" />
<path d="M22,764 a2,2 0 0 1 2,-2 H37 l3,5 H58 a2,2 0 0 1 2,2 V782 a2,2 0 0 1 -2,2 H24 a2,2 0 0 1 -2,-2 Z" fill="none" stroke="#858585" stroke-width="3" stroke-linecap="round" stroke-linejoin="round" />
<path d="M22,770 H60" fill="none" stroke="#858585" stroke-width="3" stroke-linecap="round" stroke-linejoin="round" />
<circle cx="44" cy="1513" r="22.5" fill="none" stroke="#858585" stroke-width="3"/>
<circle cx="44" cy="1507" r="9.5" fill="none" stroke="#858585" stroke-width="3"/>
<path d="M30,1530 C33,1522 38,1519 44,1519 C50,1519 55,1522 58,1530" fill="none" stroke="#858585" stroke-width="3" stroke-linecap="round" stroke-linejoin="round" />
<path d="M60.38,1604.47 L66.66,1605.05 L66.66,1612.95 L60.38,1613.53 L58.79,1617.38 L62.82,1622.23 L57.23,1627.82 L52.38,1623.79 L48.53,1625.38 L47.95,1631.66 L40.05,1631.66 L39.47,1625.38 L35.62,1623.79 L30.77,1627.82 L25.18,1622.23 L29.21,1617.38 L27.62,1613.53 L21.34,1612.95 L21.34,1605.05 L27.62,1604.47 L29.21,1600.62 L25.18,1595.77 L30.77,1590.18 L35.62,1594.21 L39.47,1592.62 L40.05,1586.34 L47.95,1586.34 L48.53,1592.62 L52.38,1594.21 L57.23,1590.18 L62.82,1595.77 L58.79,1600.62 Z" fill="none" stroke="#858585" stroke-width="3.2" stroke-linecap="round" stroke-linejoin="round" />
<circle cx="44" cy="1609" r="6" fill="none" stroke="#858585" stroke-width="3.2"/>
<path d="M339,72.5 L354.5,83 L339,93.5 Z" fill="none" stroke="#70d97c" stroke-width="3" stroke-linecap="round" stroke-linejoin="round" />
<path d="M592,78 L602,88 L612,78" fill="none" stroke="#c5c5c5" stroke-width="2.5" stroke-linecap="round" stroke-linejoin="round" />
<path d="M671.64,79.33 L675.30,79.68 L675.30,84.32 L671.64,84.67 L670.70,86.93 L673.05,89.76 L669.76,93.05 L666.93,90.70 L664.67,91.64 L664.32,95.30 L659.68,95.30 L659.33,91.64 L657.07,90.70 L654.24,93.05 L650.95,89.76 L653.30,86.93 L652.36,84.67 L648.70,84.32 L648.70,79.68 L652.36,79.33 L653.30,77.07 L650.95,74.24 L654.24,70.95 L657.07,73.30 L659.33,72.36 L659.68,68.70 L664.32,68.70 L664.67,72.36 L666.93,73.30 L669.76,70.95 L673.05,74.24 L670.70,77.07 Z" fill="none" stroke="#c5c5c5" stroke-width="2.4" stroke-linecap="round" stroke-linejoin="round" />
<circle cx="662" cy="82" r="3.5" fill="none" stroke="#c5c5c5" stroke-width="2.4"/>
<circle cx="703.5" cy="82" r="2.5" fill="#c5c5c5" />
<circle cx="714" cy="82" r="2.5" fill="#c5c5c5" />
<circle cx="724.5" cy="82" r="2.5" fill="#c5c5c5" />
<path d="M102,134 L112,144 L122,134" fill="none" stroke="#c5c5c5" stroke-width="2.2" stroke-linecap="round" stroke-linejoin="round" />
<path d="M102,751 L112,761 L122,751" fill="none" stroke="#c5c5c5" stroke-width="2.2" stroke-linecap="round" stroke-linejoin="round" />
<path d="M102,1139.5 L112,1149.5 L122,1139.5" fill="none" stroke="#c5c5c5" stroke-width="2.2" stroke-linecap="round" stroke-linejoin="round" />
<path d="M102,1543.5 L112,1553.5 L122,1543.5" fill="none" stroke="#c5c5c5" stroke-width="2.2" stroke-linecap="round" stroke-linejoin="round" />
<path d="M120,178 L130,188 L140,178" fill="none" stroke="#c5c5c5" stroke-width="2.2" stroke-linecap="round" stroke-linejoin="round" />
<path d="M142,217.5 L152,227 L142,236.5" fill="none" stroke="#c5c5c5" stroke-width="2.2" stroke-linecap="round" stroke-linejoin="round" />
<path d="M142,261.5 L152,271 L142,280.5" fill="none" stroke="#c5c5c5" stroke-width="2.2" stroke-linecap="round" stroke-linejoin="round" />
<path d="M142,305.5 L152,315 L142,324.5" fill="none" stroke="#c5c5c5" stroke-width="2.2" stroke-linecap="round" stroke-linejoin="round" />
<path d="M142,349.5 L152,359 L142,368.5" fill="none" stroke="#c5c5c5" stroke-width="2.2" stroke-linecap="round" stroke-linejoin="round" />
<path d="M142,481.5 L152,491 L142,500.5" fill="none" stroke="#c5c5c5" stroke-width="2.2" stroke-linecap="round" stroke-linejoin="round" />
<path d="M125,525.5 L135.5,535 L125,544.5" fill="none" stroke="#c5c5c5" stroke-width="2.2" stroke-linecap="round" stroke-linejoin="round" />
<circle cx="115" cy="1635" r="8" fill="#f40000" />
<path d="M148,1635.5 L153.5,1641 L162.5,1629" fill="none" stroke="#ffffff" stroke-width="3.2" stroke-linecap="round" stroke-linejoin="round" />
<path d="M830.20,75.10 A7.25,7.25 0 1 0 830.20,86.90" fill="none" stroke="#2ea3cb" stroke-width="5" stroke-linecap="round" stroke-linejoin="round" stroke-linecap="butt"/>
<path d="M824.30,81.00 h6.4 M827.50,77.80 v6.4" fill="none" stroke="#2ea3cb" stroke-width="1.9" stroke-linecap="round" stroke-linejoin="round" stroke-linecap="butt"/>
<path d="M831.40,81.00 h6.4 M834.60,77.80 v6.4" fill="none" stroke="#2ea3cb" stroke-width="1.9" stroke-linecap="round" stroke-linejoin="round" stroke-linecap="butt"/>
<path d="M988,74 L1004,90 M1004,74 L988,90" fill="none" stroke="#ffffff" stroke-width="2.5" stroke-linecap="round" stroke-linejoin="round" />
<path d="M1062,71 C1058,71 1058,73 1058,76 V79 C1058,81 1056.5,82 1055,82 C1056.5,82 1058,83 1058,85 V88 C1058,91 1058,92.5 1062,92.5" fill="none" stroke="#cbcb41" stroke-width="3" stroke-linecap="round" stroke-linejoin="round" />
<path d="M1443.5,71 L1439.5,85" fill="none" stroke="#a855d8" stroke-width="4" stroke-linecap="round" stroke-linejoin="round" />
<circle cx="1437.8" cy="91" r="2.4" fill="#a855d8" />
<path d="M1717,70 H1726 V80 H1732 L1721.5,92.7 L1711,80 H1717 Z" fill="#2ea3cb" />
<path d="M2163,82 V67 L2183,80 L2169,89" fill="none" stroke="#c5c5c5" stroke-width="2.2" stroke-linecap="round" stroke-linejoin="round" />
<path d="M2155.56,87.27 A4.44,4.78 0 0 1 2164.44,87.27 V91.37 A4.44,5.81 0 0 1 2155.56,91.37 Z" fill="none" stroke="#c5c5c5" stroke-width="1.9" stroke-linecap="round" stroke-linejoin="round" />
<path d="M2155.56,87.27 H2164.44" fill="none" stroke="#c5c5c5" stroke-width="1.9" stroke-linecap="round" stroke-linejoin="round" />
<path d="M2151.63,83.85 L2155.05,87.27" fill="none" stroke="#c5c5c5" stroke-width="1.9" stroke-linecap="round" stroke-linejoin="round" />
<path d="M2151.29,91.37 H2155.22" fill="none" stroke="#c5c5c5" stroke-width="1.9" stroke-linecap="round" stroke-linejoin="round" />
<path d="M2151.63,97.86 L2155.05,94.78" fill="none" stroke="#c5c5c5" stroke-width="1.9" stroke-linecap="round" stroke-linejoin="round" />
<path d="M2168.37,83.85 L2164.95,87.27" fill="none" stroke="#c5c5c5" stroke-width="1.9" stroke-linecap="round" stroke-linejoin="round" />
<path d="M2168.71,91.37 H2164.78" fill="none" stroke="#c5c5c5" stroke-width="1.9" stroke-linecap="round" stroke-linejoin="round" />
<path d="M2168.37,97.86 L2164.95,94.78" fill="none" stroke="#c5c5c5" stroke-width="1.9" stroke-linecap="round" stroke-linejoin="round" />
<path d="M2192,78 L2199.5,85.5 L2207,78" fill="none" stroke="#c5c5c5" stroke-width="2" stroke-linecap="round" stroke-linejoin="round" />
<path d="M2256.12,79.20 L2259.79,79.59 L2259.79,84.41 L2256.12,84.80 L2255.14,87.18 L2257.45,90.05 L2254.05,93.45 L2251.18,91.14 L2248.80,92.12 L2248.41,95.79 L2243.59,95.79 L2243.20,92.12 L2240.82,91.14 L2237.95,93.45 L2234.55,90.05 L2236.86,87.18 L2235.88,84.80 L2232.21,84.41 L2232.21,79.59 L2235.88,79.20 L2236.86,76.82 L2234.55,73.95 L2237.95,70.55 L2240.82,72.86 L2243.20,71.88 L2243.59,68.21 L2248.41,68.21 L2248.80,71.88 L2251.18,72.86 L2254.05,70.55 L2257.45,73.95 L2255.14,76.82 Z" fill="none" stroke="#c5c5c5" stroke-width="2.2" stroke-linecap="round" stroke-linejoin="round" />
<circle cx="2246" cy="82" r="3.5" fill="none" stroke="#c5c5c5" stroke-width="2.2"/>
<path d="M2285,77 V95 H2309 V77" fill="none" stroke="#c5c5c5" stroke-width="2.2" stroke-linecap="round" stroke-linejoin="round" />
<path d="M2297,66 V79 M2291.5,73.5 L2297,79 L2302.5,73.5" fill="none" stroke="#c5c5c5" stroke-width="2.2" stroke-linecap="round" stroke-linejoin="round" />
<circle cx="2294" cy="84" r="2.3" fill="#c5c5c5" />
<circle cx="2302" cy="84" r="2.3" fill="#c5c5c5" />
<circle cx="2289.5" cy="90" r="2.3" fill="#c5c5c5" />
<circle cx="2297.5" cy="90" r="2.3" fill="#c5c5c5" />
<path d="M2350,68 C2354,68 2365,88 2365,93 C2365,96 2356,96.5 2350,96.5 C2344,96.5 2335,96 2335,93 C2335,88 2346,68 2350,68 Z M2350,78 L2343,89 H2357 Z" fill="#c5c5c5" fill-rule="evenodd"/>
<rect x="2391" y="68" width="25" height="25" rx="2.5" fill="none" stroke="#c5c5c5" stroke-width="2.2"/>
<path d="M2403.5,68 V93" fill="none" stroke="#c5c5c5" stroke-width="2.2" stroke-linecap="round" stroke-linejoin="round" />
<circle cx="2444" cy="82" r="2.5" fill="#c5c5c5" />
<circle cx="2454" cy="82" r="2.5" fill="#c5c5c5" />
<circle cx="2464" cy="82" r="2.5" fill="#c5c5c5" />
<path d="M953,131 L962,139.5 L953,148" fill="none" stroke="#a9a9a9" stroke-width="2" stroke-linecap="round" stroke-linejoin="round" />
<path d="M1025,131 L1034,139.5 L1025,148" fill="none" stroke="#a9a9a9" stroke-width="2" stroke-linecap="round" stroke-linejoin="round" />
<path d="M1199,131 L1208,139.5 L1199,148" fill="none" stroke="#a9a9a9" stroke-width="2" stroke-linecap="round" stroke-linejoin="round" />
<path d="M1069.20,132.10 A7.25,7.25 0 1 0 1069.20,143.90" fill="none" stroke="#2ea3cb" stroke-width="5" stroke-linecap="round" stroke-linejoin="round" stroke-linecap="butt"/>
<path d="M1063.30,138.00 h6.4 M1066.50,134.80 v6.4" fill="none" stroke="#2ea3cb" stroke-width="1.9" stroke-linecap="round" stroke-linejoin="round" stroke-linecap="butt"/>
<path d="M1070.40,138.00 h6.4 M1073.60,134.80 v6.4" fill="none" stroke="#2ea3cb" stroke-width="1.9" stroke-linecap="round" stroke-linejoin="round" stroke-linecap="butt"/>
<path d="M1234,126 L1245,132 V146 L1234,152 L1223,146 V132 Z M1223,132 L1234,138 L1245,132 M1234,138 V152" fill="none" stroke="#b180d7" stroke-width="2.2" stroke-linecap="round" stroke-linejoin="round" />
<rect x="1093" y="69" width="4" height="4" fill="#8a8a8a"/>
<rect x="1093" y="77" width="4" height="4" fill="#8a8a8a"/>
<rect x="1093" y="85" width="4" height="4" fill="#8a8a8a"/>
<rect x="1101" y="69" width="4" height="4" fill="#8a8a8a"/>
<rect x="1101" y="77" width="4" height="4" fill="#8a8a8a"/>
<rect x="1101" y="85" width="4" height="4" fill="#8a8a8a"/>
<path d="M1127.5,67 V91" fill="none" stroke="#57bdfd" stroke-width="3.5" stroke-linecap="round" stroke-linejoin="round" stroke-linecap="butt"/>
<path d="M1135,69.5 L1148.5,79 L1135,88.5 Z" fill="none" stroke="#57bdfd" stroke-width="3.2" stroke-linecap="round" stroke-linejoin="round" />
<path d="M1178.5,78 A11,11 0 0 1 1198.5,72.5" fill="none" stroke="#57bdfd" stroke-width="3" stroke-linecap="round" stroke-linejoin="round" />
<path d="M1199.5,66.5 V77 H1191" fill="none" stroke="#57bdfd" stroke-width="3" stroke-linecap="round" stroke-linejoin="round" stroke-linecap="butt" stroke-linejoin="miter"/>
<circle cx="1189" cy="87" r="4.2" fill="#57bdfd" />
<path d="M1240,66 V81 M1233.5,75 L1240,81.5 L1246.5,75" fill="none" stroke="#57bdfd" stroke-width="3" stroke-linecap="round" stroke-linejoin="round" />
<circle cx="1240.5" cy="88.7" r="4" fill="#57bdfd" />
<path d="M1292.5,83 V67 M1286,73.5 L1292.5,67 L1299,73.5" fill="none" stroke="#57bdfd" stroke-width="3" stroke-linecap="round" stroke-linejoin="round" />
<circle cx="1292.5" cy="88.7" r="4" fill="#57bdfd" />
<path d="M1337,71 A10.5,10.5 0 1 1 1335,83" fill="none" stroke="#70d97c" stroke-width="3" stroke-linecap="round" stroke-linejoin="round" />
<path d="M1335,66 V73.5 H1342.5" fill="none" stroke="#70d97c" stroke-width="3" stroke-linecap="round" stroke-linejoin="round" />
<rect x="1387" y="69" width="21" height="20" fill="none" stroke="#f48771" stroke-width="3"/>
<path d="M770,820.5 H783 L790,831 L783,841.5 H770 Z" fill="none" stroke="#ffcc00" stroke-width="2.8" stroke-linecap="round" stroke-linejoin="round" />
<circle cx="777.5" cy="831" r="4.2" fill="#ff0000" />
<circle cx="778" cy="975" r="8" fill="#7b1010" />
<path d="M2326,1185 H2352 M2339,1172 V1198" fill="none" stroke="#c5c5c5" stroke-width="2.4" stroke-linecap="round" stroke-linejoin="round" stroke-linecap="butt"/>
<path d="M2365,1183 L2372,1190 L2379,1183" fill="none" stroke="#c5c5c5" stroke-width="2" stroke-linecap="round" stroke-linejoin="round" />
<path d="M2408,1189.5 L2418,1179.5 L2428,1189.5" fill="none" stroke="#c5c5c5" stroke-width="2.2" stroke-linecap="round" stroke-linejoin="round" />
<path d="M2454,1176 L2470,1192 M2470,1176 L2454,1192" fill="none" stroke="#c5c5c5" stroke-width="2.2" stroke-linecap="round" stroke-linejoin="round" />
<rect x="801" y="1261" width="13" height="26" fill="none" stroke="#cccccc" stroke-width="2"/>
<rect x="2285" y="1227" width="26" height="26" rx="3" fill="none" stroke="#cccccc" stroke-width="2"/>
<path d="M2294,1233 L2301,1240 L2294,1247" fill="none" stroke="#cccccc" stroke-width="2" stroke-linecap="round" stroke-linejoin="round" />
<rect x="2285" y="1271" width="26" height="26" rx="3" fill="none" stroke="#cccccc" stroke-width="2"/>
<path d="M2294,1277 L2301,1284 L2294,1291" fill="none" stroke="#cccccc" stroke-width="2" stroke-linecap="round" stroke-linejoin="round" />
<rect x="2285" y="1315" width="26" height="26" rx="3" fill="none" stroke="#cccccc" stroke-width="2"/>
<path d="M2294,1321 L2301,1328 L2294,1335" fill="none" stroke="#cccccc" stroke-width="2" stroke-linecap="round" stroke-linejoin="round" />
<ellipse cx="2298" cy="1374.5" rx="9.5" ry="11" fill="none" stroke="#cccccc" stroke-width="2"/>
<path d="M2292.5,1364.5 A5.5,5.5 0 0 1 2303.5,1364.5" fill="none" stroke="#cccccc" stroke-width="2" stroke-linecap="round" stroke-linejoin="round" />
<path d="M2293.5,1370 L2302.5,1379 M2302.5,1370 L2293.5,1379" fill="none" stroke="#cccccc" stroke-width="2" stroke-linecap="round" stroke-linejoin="round" />
<path d="M2282,1374.5 H2288.5 M2307.5,1374.5 H2314 M2284,1360 L2290,1366 M2312,1360 L2306,1366 M2284,1389 L2290,1383 M2312,1389 L2306,1383" fill="none" stroke="#cccccc" stroke-width="2" stroke-linecap="round" stroke-linejoin="round" />
<path d="M22,1674.5 L29.3,1682 L22,1689.4 M37.6,1667.4 L30.5,1674.7 L37.6,1681.8" fill="none" stroke="#ffffff" stroke-width="2" stroke-linecap="round" stroke-linejoin="round" />
<circle cx="593" cy="1669.5" r="3.6" fill="none" stroke="#ffffff" stroke-width="2"/>
<circle cx="605" cy="1674.5" r="3.6" fill="none" stroke="#ffffff" stroke-width="2"/>
<circle cx="593" cy="1688.5" r="3.6" fill="none" stroke="#ffffff" stroke-width="2"/>
<path d="M593,1673 V1685 M605,1678 C605,1683 600,1683 597,1683 C594,1683 593,1684 593,1685" fill="none" stroke="#ffffff" stroke-width="2" stroke-linecap="round" stroke-linejoin="round" />
<path d="M905.6,1682.9 A10.5,10.5 0 1 1 926,1679.3 M925.4,1675.7 A10.5,10.5 0 1 1 905,1679.3" fill="none" stroke="#ffffff" stroke-width="2" stroke-linecap="round" stroke-linejoin="round" />
<path d="M921.5,1675.3 L926,1680 L930.5,1675.3 M900.5,1683.6 L905,1678.8 L909.5,1683.6" fill="none" stroke="#ffffff" stroke-width="2" stroke-linecap="round" stroke-linejoin="round" />
<circle cx="974" cy="1679.5" r="10.5" fill="none" stroke="#ffffff" stroke-width="2"/>
<path d="M969.5,1675 L978.5,1684 M978.5,1675 L969.5,1684" fill="none" stroke="#ffffff" stroke-width="2" stroke-linecap="round" stroke-linejoin="round" />
<path d="M1032,1668.5 L1043.5,1690.5 H1020.5 Z" fill="none" stroke="#ffffff" stroke-width="2" stroke-linecap="round" stroke-linejoin="round" />
<path d="M1032,1676 V1683" fill="none" stroke="#ffffff" stroke-width="2" stroke-linecap="round" stroke-linejoin="round" />
<circle cx="1032" cy="1687" r="1.3" fill="#ffffff" />
<path d="M1113.5,1677 L1108,1690 M1113.5,1677 L1119,1690 M1110,1685 H1117" fill="none" stroke="#ffffff" stroke-width="2" stroke-linecap="round" stroke-linejoin="round" />
<circle cx="1113.5" cy="1675" r="2.3" fill="#ffffff" />
<path d="M1108,1670.5 A6.5,6.5 0 0 0 1108,1679.5 M1119,1670.5 A6.5,6.5 0 0 1 1119,1679.5 M1104,1667.5 A11,11 0 0 0 1104,1681.5 M1123,1667.5 A11,11 0 0 1 1123,1681.5" fill="none" stroke="#ffffff" stroke-width="2" stroke-linecap="round" stroke-linejoin="round" />
<path d="M1186,1678 V1668 L1203,1680 L1192,1688" fill="none" stroke="#ffffff" stroke-width="2" stroke-linecap="round" stroke-linejoin="round" />
<path d="M1178.94,1685.50 A4.06,4.38 0 0 1 1187.06,1685.50 V1689.25 A4.06,5.31 0 0 1 1178.94,1689.25 Z" fill="none" stroke="#ffffff" stroke-width="1.8" stroke-linecap="round" stroke-linejoin="round" />
<path d="M1178.94,1685.50 H1187.06" fill="none" stroke="#ffffff" stroke-width="1.8" stroke-linecap="round" stroke-linejoin="round" />
<path d="M1175.34,1682.38 L1178.47,1685.50" fill="none" stroke="#ffffff" stroke-width="1.8" stroke-linecap="round" stroke-linejoin="round" />
<path d="M1175.03,1689.25 H1178.62" fill="none" stroke="#ffffff" stroke-width="1.8" stroke-linecap="round" stroke-linejoin="round" />
<path d="M1175.34,1695.19 L1178.47,1692.38" fill="none" stroke="#ffffff" stroke-width="1.8" stroke-linecap="round" stroke-linejoin="round" />
<path d="M1190.66,1682.38 L1187.53,1685.50" fill="none" stroke="#ffffff" stroke-width="1.8" stroke-linecap="round" stroke-linejoin="round" />
<path d="M1190.97,1689.25 H1187.38" fill="none" stroke="#ffffff" stroke-width="1.8" stroke-linecap="round" stroke-linejoin="round" />
<path d="M1190.66,1695.19 L1187.53,1692.38" fill="none" stroke="#ffffff" stroke-width="1.8" stroke-linecap="round" stroke-linejoin="round" />
<path d="M1241,1690 L1252,1679" fill="none" stroke="#ffffff" stroke-width="2" stroke-linecap="round" stroke-linejoin="round" />
<path d="M1252,1679 a5.5,5.5 0 1 1 6,-9 l-4,4 l3,3 l4,-4 a5.5,5.5 0 0 1 -9,6" fill="none" stroke="#ffffff" stroke-width="2" stroke-linecap="round" stroke-linejoin="round" />
<path d="M1242,1671 l3,-1 l3,3 l-1,3 l11,11 a2,2 0 0 1 -3,3 l-11,-11 l-3,1 l-3,-3 z" fill="none" stroke="#ffffff" stroke-width="1.8" stroke-linecap="round" stroke-linejoin="round" />
<path d="M1521,1690 L1532,1679" fill="none" stroke="#ffffff" stroke-width="2" stroke-linecap="round" stroke-linejoin="round" />
<path d="M1532,1679 a5.5,5.5 0 1 1 6,-9 l-4,4 l3,3 l4,-4 a5.5,5.5 0 0 1 -9,6" fill="none" stroke="#ffffff" stroke-width="2" stroke-linecap="round" stroke-linejoin="round" />
<path d="M1522,1671 l3,-1 l3,3 l-1,3 l11,11 a2,2 0 0 1 -3,3 l-11,-11 l-3,1 l-3,-3 z" fill="none" stroke="#ffffff" stroke-width="1.8" stroke-linecap="round" stroke-linejoin="round" />
<path d="M1964,1690 L1975,1679" fill="none" stroke="#ffffff" stroke-width="2" stroke-linecap="round" stroke-linejoin="round" />
<path d="M1975,1679 a5.5,5.5 0 1 1 6,-9 l-4,4 l3,3 l4,-4 a5.5,5.5 0 0 1 -9,6" fill="none" stroke="#ffffff" stroke-width="2" stroke-linecap="round" stroke-linejoin="round" />
<path d="M1965,1671 l3,-1 l3,3 l-1,3 l11,11 a2,2 0 0 1 -3,3 l-11,-11 l-3,1 l-3,-3 z" fill="none" stroke="#ffffff" stroke-width="1.8" stroke-linecap="round" stroke-linejoin="round" />
<path d="M1416.19,1677.23 L1419.82,1677.44 L1419.82,1681.56 L1416.19,1681.77 L1415.40,1683.69 L1417.82,1686.40 L1414.90,1689.32 L1412.19,1686.90 L1410.27,1687.69 L1410.06,1691.32 L1405.94,1691.32 L1405.73,1687.69 L1403.81,1686.90 L1401.10,1689.32 L1398.18,1686.40 L1400.60,1683.69 L1399.81,1681.77 L1396.18,1681.56 L1396.18,1677.44 L1399.81,1677.23 L1400.60,1675.31 L1398.18,1672.60 L1401.10,1669.68 L1403.81,1672.10 L1405.73,1671.31 L1405.94,1667.68 L1410.06,1667.68 L1410.27,1671.31 L1412.19,1672.10 L1414.90,1669.68 L1417.82,1672.60 L1415.40,1675.31 Z" fill="none" stroke="#ffffff" stroke-width="2" stroke-linecap="round" stroke-linejoin="round" />
<circle cx="1408" cy="1679.5" r="3.2" fill="none" stroke="#ffffff" stroke-width="2"/>
<path d="M1758.04,1677.33 A5.96,6.42 0 0 1 1769.96,1677.33 V1682.83 A5.96,7.79 0 0 1 1758.04,1682.83 Z" fill="none" stroke="#ffffff" stroke-width="2" stroke-linecap="round" stroke-linejoin="round" />
<path d="M1758.04,1677.33 H1769.96" fill="none" stroke="#ffffff" stroke-width="2" stroke-linecap="round" stroke-linejoin="round" />
<path d="M1752.77,1672.75 L1757.35,1677.33" fill="none" stroke="#ffffff" stroke-width="2" stroke-linecap="round" stroke-linejoin="round" />
<path d="M1752.31,1682.83 H1757.58" fill="none" stroke="#ffffff" stroke-width="2" stroke-linecap="round" stroke-linejoin="round" />
<path d="M1752.77,1691.54 L1757.35,1687.42" fill="none" stroke="#ffffff" stroke-width="2" stroke-linecap="round" stroke-linejoin="round" />
<path d="M1775.23,1672.75 L1770.65,1677.33" fill="none" stroke="#ffffff" stroke-width="2" stroke-linecap="round" stroke-linejoin="round" />
<path d="M1775.69,1682.83 H1770.42" fill="none" stroke="#ffffff" stroke-width="2" stroke-linecap="round" stroke-linejoin="round" />
<path d="M1775.23,1691.54 L1770.65,1687.42" fill="none" stroke="#ffffff" stroke-width="2" stroke-linecap="round" stroke-linejoin="round" />
<path d="M1816.5,1669 L1831.5,1680 L1816.5,1691 Z" fill="none" stroke="#ffffff" stroke-width="2" stroke-linecap="round" stroke-linejoin="round" />
<path d="M2127,1668 H2137 M2129.5,1668 V1677 L2122.5,1691 H2141.5 L2134.5,1677 V1668 M2125.5,1685 H2138.5" fill="none" stroke="#ffffff" stroke-width="2" stroke-linecap="round" stroke-linejoin="round" />
<path d="M2394,1668 H2408 V1681 H2401 L2396,1685 V1681" fill="none" stroke="#ffffff" stroke-width="2" stroke-linecap="round" stroke-linejoin="round" />
<circle cx="2392" cy="1682" r="4" fill="none" stroke="#ffffff" stroke-width="2"/>
<path d="M2384.5,1692 C2385,1687 2388,1686 2392,1686 C2396,1686 2399,1687 2399.5,1692" fill="none" stroke="#ffffff" stroke-width="2" stroke-linecap="round" stroke-linejoin="round" />
<path d="M2448,1687 V1677 A8,8 0 0 1 2464,1677 V1687 L2466,1689 H2446 Z M2453,1690 A3,3 0 0 0 2459,1690" fill="none" stroke="#ffffff" stroke-width="2" stroke-linecap="round" stroke-linejoin="round" />
<path d="M1135.5,1674.5 L1141.5,1671 V1688" fill="none" stroke="#ffffff" stroke-width="2.4" stroke-linecap="round" stroke-linejoin="round" stroke-linecap="butt" stroke-linejoin="miter"/>
<path d="M1365.3,1182.3 L1371,1178.3 V1193.2" fill="none" stroke="#ffffff" stroke-width="2.8" stroke-linecap="round" stroke-linejoin="round" stroke-linecap="butt" stroke-linejoin="miter"/>
<path d="M0,1688 A10,10 0 0 0 10,1698 H0 Z" fill="#c8c8c8" />
<path d="M2496,1688 A10,10 0 0 1 2486,1698 H2496 Z" fill="#000000" />
<circle cx="1300" cy="1613" r="28" fill="#f43347" />
<path d="M1292.50,1603.00 L1301.59,1597.60 H1305.99 V1626.00 H1301.02 V1604.13 L1292.50,1608.96 Z" fill="#ffffff" />
<circle cx="1450.6" cy="1614" r="28" fill="#f43347" />
<circle cx="1757" cy="1613" r="28" fill="#f43347" />
<circle cx="1896" cy="1614" r="28" fill="#f43347" />
<rect x="2273" y="389" width="199" height="4" fill="#264f78"/>
<g opacity="0.5"><rect x="2274" y="162.0" width="6" height="2.5" fill="#6a9955"/><rect x="2276" y="166.0" width="2" height="2.5" fill="#6a9955"/><rect x="2280" y="166.0" width="10" height="2.5" fill="#6a9955"/><rect x="2296" y="166.0" width="20" height="2.5" fill="#6a9955"/><rect x="2276" y="170.0" width="2" height="2.5" fill="#6a9955"/><rect x="2280" y="170.0" width="12" height="2.5" fill="#6a9955"/><rect x="2296" y="170.0" width="28" height="2.5" fill="#6a9955"/><rect x="2326" y="170.0" width="4" height="2.5" fill="#6a9955"/><rect x="2332" y="170.0" width="20" height="2.5" fill="#6a9955"/><rect x="2354" y="170.0" width="20" height="2.5" fill="#6a9955"/><rect x="2376" y="170.0" width="22" height="2.5" fill="#6a9955"/><rect x="2276" y="174.0" width="2" height="2.5" fill="#6a9955"/><rect x="2276" y="178.0" width="2" height="2.5" fill="#6a9955"/><rect x="2280" y="178.0" width="20" height="2.5" fill="#6a9955"/><rect x="2276" y="182.0" width="2" height="2.5" fill="#6a9955"/><rect x="2280" y="182.0" width="18" height="2.5" fill="#6a9955"/><rect x="2300" y="182.0" width="6" height="2.5" fill="#6a9955"/><rect x="2308" y="182.0" width="20" height="2.5" fill="#6a9955"/><rect x="2330" y="182.0" width="20" height="2.5" fill="#6a9955"/><rect x="2352" y="182.0" width="18" height="2.5" fill="#6a9955"/><rect x="2372" y="182.0" width="54" height="2.5" fill="#6a9955"/><rect x="2276" y="186.0" width="2" height="2.5" fill="#6a9955"/><rect x="2302" y="186.0" width="22" height="2.5" fill="#6a9955"/><rect x="2326" y="186.0" width="10" height="2.5" fill="#6a9955"/><rect x="2338" y="186.0" width="2" height="2.5" fill="#6a9955"/><rect x="2342" y="186.0" width="16" height="2.5" fill="#6a9955"/><rect x="2360" y="186.0" width="6" height="2.5" fill="#6a9955"/><rect x="2368" y="186.0" width="16" height="2.5" fill="#6a9955"/><rect x="2276" y="190.0" width="2" height="2.5" fill="#6a9955"/><rect x="2306" y="190.0" width="6" height="2.5" fill="#6a9955"/><rect x="2314" y="190.0" width="24" height="2.5" fill="#6a9955"/><rect x="2340" y="190.0" width="8" height="2.5" fill="#6a9955"/><rect x="2350" y="190.0" width="22" height="2.5" fill="#6a9955"/><rect x="2374" y="190.0" width="4" height="2.5" fill="#6a9955"/><rect x="2276" y="194.0" width="2" height="2.5" fill="#6a9955"/><rect x="2306" y="194.0" width="82" height="2.5" fill="#6a9955"/><rect x="2276" y="198.0" width="2" height="2.5" fill="#6a9955"/><rect x="2276" y="202.0" width="4" height="2.5" fill="#6a9955"/><rect x="2274" y="210.0" width="16" height="2.5" fill="#c586c0"/><rect x="2292" y="210.0" width="34" height="2.5" fill="#ce9178"/><rect x="2274" y="214.0" width="16" height="2.5" fill="#c586c0"/><rect x="2292" y="214.0" width="34" height="2.5" fill="#ce9178"/><rect x="2274" y="222.0" width="16" height="2.5" fill="#c586c0"/><rect x="2292" y="222.0" width="16" height="2.5" fill="#ce9178"/><rect x="2274" y="226.0" width="16" height="2.5" fill="#c586c0"/><rect x="2292" y="226.0" width="18" height="2.5" fill="#ce9178"/><rect x="2274" y="234.0" width="16" height="2.5" fill="#c586c0"/><rect x="2292" y="234.0" width="58" height="2.5" fill="#ce9178"/><rect x="2274" y="242.0" width="14" height="2.5" fill="#c586c0"/><rect x="2290" y="242.0" width="12" height="2.5" fill="#3ea2e4"/><rect x="2274" y="246.0" width="12" height="2.5" fill="#c586c0"/><rect x="2288" y="246.0" width="18" height="2.5" fill="#3ea2e4"/><rect x="2274" y="250.0" width="12" height="2.5" fill="#c586c0"/><rect x="2288" y="250.0" width="14" height="2.5" fill="#3ea2e4"/><rect x="2274" y="254.0" width="16" height="2.5" fill="#c586c0"/><rect x="2292" y="254.0" width="26" height="2.5" fill="#ce9178"/><rect x="2274" y="258.0" width="12" height="2.5" fill="#c586c0"/><rect x="2290" y="258.0" width="4" height="2.5" fill="#6a9955"/><rect x="2296" y="258.0" width="14" height="2.5" fill="#6a9955"/><rect x="2274" y="262.0" width="10" height="2.5" fill="#c586c0"/><rect x="2274" y="266.0" width="16" height="2.5" fill="#c586c0"/><rect x="2292" y="266.0" width="14" height="2.5" fill="#ce9178"/><rect x="2274" y="270.0" width="12" height="2.5" fill="#c586c0"/><rect x="2290" y="270.0" width="4" height="2.5" fill="#6a9955"/><rect x="2296" y="270.0" width="18" height="2.5" fill="#6a9955"/><rect x="2274" y="274.0" width="12" height="2.5" fill="#c586c0"/><rect x="2290" y="274.0" width="4" height="2.5" fill="#6a9955"/><rect x="2296" y="274.0" width="12" height="2.5" fill="#6a9955"/><rect x="2274" y="282.0" width="16" height="2.5" fill="#c586c0"/><rect x="2292" y="282.0" width="86" height="2.5" fill="#ce9178"/><rect x="2274" y="286.0" width="16" height="2.5" fill="#c586c0"/><rect x="2292" y="286.0" width="94" height="2.5" fill="#ce9178"/><rect x="2274" y="290.0" width="16" height="2.5" fill="#c586c0"/><rect x="2292" y="290.0" width="42" height="2.5" fill="#ce9178"/><rect x="2274" y="294.0" width="16" height="2.5" fill="#c586c0"/><rect x="2292" y="294.0" width="34" height="2.5" fill="#ce9178"/><rect x="2274" y="298.0" width="16" height="2.5" fill="#c586c0"/><rect x="2292" y="298.0" width="38" height="2.5" fill="#ce9178"/><rect x="2274" y="302.0" width="16" height="2.5" fill="#c586c0"/><rect x="2292" y="302.0" width="38" height="2.5" fill="#ce9178"/><rect x="2274" y="306.0" width="16" height="2.5" fill="#c586c0"/><rect x="2292" y="306.0" width="38" height="2.5" fill="#ce9178"/><rect x="2274" y="314.0" width="12" height="2.5" fill="#c586c0"/><rect x="2288" y="314.0" width="28" height="2.5" fill="#3ea2e4"/><rect x="2274" y="318.0" width="16" height="2.5" fill="#c586c0"/><rect x="2292" y="318.0" width="46" height="2.5" fill="#ce9178"/><rect x="2274" y="322.0" width="12" height="2.5" fill="#c586c0"/><rect x="2274" y="330.0" width="14" height="2.5" fill="#c586c0"/><rect x="2290" y="330.0" width="12" height="2.5" fill="#3ea2e4"/><rect x="2306" y="330.0" width="4" height="2.5" fill="#6a9955"/><rect x="2312" y="330.0" width="4" height="2.5" fill="#6a9955"/><rect x="2318" y="330.0" width="14" height="2.5" fill="#6a9955"/><rect x="2334" y="330.0" width="8" height="2.5" fill="#6a9955"/><rect x="2344" y="330.0" width="14" height="2.5" fill="#6a9955"/><rect x="2360" y="330.0" width="8" height="2.5" fill="#6a9955"/><rect x="2370" y="330.0" width="12" height="2.5" fill="#6a9955"/><rect x="2384" y="330.0" width="4" height="2.5" fill="#6a9955"/><rect x="2390" y="330.0" width="6" height="2.5" fill="#6a9955"/><rect x="2398" y="330.0" width="16" height="2.5" fill="#6a9955"/><rect x="2274" y="334.0" width="8" height="2.5" fill="#569cd6"/><rect x="2284" y="334.0" width="58" height="2.5" fill="#dcdcaa"/><rect x="2342" y="334.0" width="2" height="2.5" fill="#d4d4d4"/><rect x="2344" y="334.0" width="2" height="2.5" fill="#d4d4d4"/><rect x="2274" y="338.0" width="2" height="2.5" fill="#d4d4d4"/><rect x="2274" y="342.0" width="12" height="2.5" fill="#c586c0"/><rect x="2288" y="342.0" width="18" height="2.5" fill="#3ea2e4"/><rect x="2274" y="346.0" width="12" height="2.5" fill="#c586c0"/><rect x="2288" y="346.0" width="14" height="2.5" fill="#3ea2e4"/><rect x="2282" y="350.0" width="44" height="2.5" fill="#3ea2e4"/><rect x="2326" y="350.0" width="2" height="2.5" fill="#d4d4d4"/><rect x="2328" y="350.0" width="44" height="2.5" fill="#3ea2e4"/><rect x="2372" y="350.0" width="2" height="2.5" fill="#d4d4d4"/><rect x="2374" y="350.0" width="2" height="2.5" fill="#d4d4d4"/><rect x="2378" y="350.0" width="2" height="2.5" fill="#d4d4d4"/><rect x="2382" y="350.0" width="2" height="2.5" fill="#d4d4d4"/><rect x="2384" y="350.0" width="32" height="2.5" fill="#3ea2e4"/><rect x="2416" y="350.0" width="2" height="2.5" fill="#d4d4d4"/><rect x="2418" y="350.0" width="2" height="2.5" fill="#d4d4d4"/><rect x="2274" y="354.0" width="12" height="2.5" fill="#c586c0"/><rect x="2290" y="354.0" width="4" height="2.5" fill="#6a9955"/><rect x="2296" y="354.0" width="14" height="2.5" fill="#6a9955"/><rect x="2274" y="358.0" width="10" height="2.5" fill="#c586c0"/><rect x="2282" y="362.0" width="28" height="2.5" fill="#dcdcaa"/><rect x="2310" y="362.0" width="2" height="2.5" fill="#d4d4d4"/><rect x="2312" y="362.0" width="24" height="2.5" fill="#3ea2e4"/><rect x="2338" y="362.0" width="2" height="2.5" fill="#d4d4d4"/><rect x="2342" y="362.0" width="20" height="2.5" fill="#3ea2e4"/><rect x="2364" y="362.0" width="2" height="2.5" fill="#d4d4d4"/><rect x="2368" y="362.0" width="22" height="2.5" fill="#3ea2e4"/><rect x="2390" y="362.0" width="2" height="2.5" fill="#d4d4d4"/><rect x="2392" y="362.0" width="2" height="2.5" fill="#d4d4d4"/><rect x="2274" y="366.0" width="12" height="2.5" fill="#c586c0"/><rect x="2290" y="366.0" width="4" height="2.5" fill="#6a9955"/><rect x="2296" y="366.0" width="18" height="2.5" fill="#6a9955"/><rect x="2274" y="370.0" width="2" height="2.5" fill="#d4d4d4"/><rect x="2274" y="374.0" width="12" height="2.5" fill="#c586c0"/><rect x="2290" y="374.0" width="4" height="2.5" fill="#6a9955"/><rect x="2296" y="374.0" width="12" height="2.5" fill="#6a9955"/><rect x="2274" y="382.0" width="6" height="2.5" fill="#569cd6"/><rect x="2282" y="382.0" width="8" height="2.5" fill="#dcdcaa"/><rect x="2290" y="382.0" width="2" height="2.5" fill="#d4d4d4"/><rect x="2292" y="382.0" width="6" height="2.5" fill="#569cd6"/><rect x="2300" y="382.0" width="8" height="2.5" fill="#9cdcfe"/><rect x="2308" y="382.0" width="2" height="2.5" fill="#d4d4d4"/><rect x="2312" y="382.0" width="8" height="2.5" fill="#569cd6"/><rect x="2320" y="382.0" width="2" height="2.5" fill="#d4d4d4"/><rect x="2324" y="382.0" width="8" height="2.5" fill="#9cdcfe"/><rect x="2332" y="382.0" width="2" height="2.5" fill="#d4d4d4"/><rect x="2334" y="382.0" width="2" height="2.5" fill="#d4d4d4"/><rect x="2336" y="382.0" width="2" height="2.5" fill="#d4d4d4"/><rect x="2274" y="386.0" width="2" height="2.5" fill="#d4d4d4"/><rect x="2282" y="390.0" width="50" height="2.5" fill="#4ec9b0"/><rect x="2334" y="390.0" width="14" height="2.5" fill="#dcdcaa"/><rect x="2348" y="390.0" width="2" height="2.5" fill="#d4d4d4"/><rect x="2350" y="390.0" width="8" height="2.5" fill="#9cdcfe"/><rect x="2358" y="390.0" width="2" height="2.5" fill="#d4d4d4"/><rect x="2362" y="390.0" width="8" height="2.5" fill="#9cdcfe"/><rect x="2370" y="390.0" width="2" height="2.5" fill="#d4d4d4"/><rect x="2372" y="390.0" width="2" height="2.5" fill="#d4d4d4"/><rect x="2282" y="394.0" width="14" height="2.5" fill="#4ec9b0"/><rect x="2296" y="394.0" width="2" height="2.5" fill="#d4d4d4"/><rect x="2298" y="394.0" width="2" height="2.5" fill="#d4d4d4"/><rect x="2300" y="394.0" width="26" height="2.5" fill="#dcdcaa"/><rect x="2326" y="394.0" width="2" height="2.5" fill="#d4d4d4"/><rect x="2328" y="394.0" width="14" height="2.5" fill="#9cdcfe"/><rect x="2342" y="394.0" width="2" height="2.5" fill="#d4d4d4"/><rect x="2344" y="394.0" width="18" height="2.5" fill="#9cdcfe"/><rect x="2362" y="394.0" width="2" height="2.5" fill="#d4d4d4"/><rect x="2364" y="394.0" width="2" height="2.5" fill="#d4d4d4"/><rect x="2274" y="398.0" width="14" height="2.5" fill="#c586c0"/><rect x="2290" y="398.0" width="12" height="2.5" fill="#3ea2e4"/><rect x="2306" y="398.0" width="4" height="2.5" fill="#6a9955"/><rect x="2312" y="398.0" width="10" height="2.5" fill="#6a9955"/><rect x="2324" y="398.0" width="4" height="2.5" fill="#6a9955"/><rect x="2330" y="398.0" width="14" height="2.5" fill="#6a9955"/><rect x="2346" y="398.0" width="16" height="2.5" fill="#6a9955"/><rect x="2364" y="398.0" width="10" height="2.5" fill="#6a9955"/><rect x="2376" y="398.0" width="20" height="2.5" fill="#6a9955"/><rect x="2398" y="398.0" width="6" height="2.5" fill="#6a9955"/><rect x="2406" y="398.0" width="6" height="2.5" fill="#6a9955"/><rect x="2414" y="398.0" width="14" height="2.5" fill="#6a9955"/><rect x="2282" y="402.0" width="4" height="2.5" fill="#c586c0"/><rect x="2288" y="402.0" width="2" height="2.5" fill="#d4d4d4"/><rect x="2290" y="402.0" width="14" height="2.5" fill="#9cdcfe"/><rect x="2304" y="402.0" width="2" height="2.5" fill="#d4d4d4"/><rect x="2306" y="402.0" width="34" height="2.5" fill="#9cdcfe"/><rect x="2340" y="402.0" width="2" height="2.5" fill="#d4d4d4"/><rect x="2282" y="406.0" width="2" height="2.5" fill="#d4d4d4"/><rect x="2290" y="410.0" width="58" height="2.5" fill="#dcdcaa"/><rect x="2348" y="410.0" width="2" height="2.5" fill="#d4d4d4"/><rect x="2350" y="410.0" width="2" height="2.5" fill="#d4d4d4"/><rect x="2352" y="410.0" width="2" height="2.5" fill="#d4d4d4"/><rect x="2282" y="414.0" width="2" height="2.5" fill="#d4d4d4"/><rect x="2274" y="418.0" width="12" height="2.5" fill="#c586c0"/><rect x="2290" y="418.0" width="4" height="2.5" fill="#6a9955"/><rect x="2296" y="418.0" width="12" height="2.5" fill="#6a9955"/><rect x="2282" y="426.0" width="8" height="2.5" fill="#dcdcaa"/><rect x="2290" y="426.0" width="2" height="2.5" fill="#d4d4d4"/><rect x="2292" y="426.0" width="10" height="2.5" fill="#ce9178"/><rect x="2304" y="426.0" width="4" height="2.5" fill="#ce9178"/><rect x="2310" y="426.0" width="24" height="2.5" fill="#ce9178"/><rect x="2336" y="426.0" width="14" height="2.5" fill="#ce9178"/><rect x="2352" y="426.0" width="12" height="2.5" fill="#ce9178"/><rect x="2364" y="426.0" width="2" height="2.5" fill="#d4d4d4"/><rect x="2292" y="430.0" width="20" height="2.5" fill="#4ec9b0"/><rect x="2312" y="430.0" width="2" height="2.5" fill="#d4d4d4"/><rect x="2314" y="430.0" width="2" height="2.5" fill="#d4d4d4"/><rect x="2316" y="430.0" width="14" height="2.5" fill="#4ec9b0"/><rect x="2330" y="430.0" width="2" height="2.5" fill="#d4d4d4"/><rect x="2332" y="430.0" width="2" height="2.5" fill="#d4d4d4"/><rect x="2334" y="430.0" width="22" height="2.5" fill="#9cdcfe"/><rect x="2356" y="430.0" width="2" height="2.5" fill="#d4d4d4"/><rect x="2358" y="430.0" width="2" height="2.5" fill="#d4d4d4"/><rect x="2274" y="438.0" width="12" height="2.5" fill="#c586c0"/><rect x="2288" y="438.0" width="28" height="2.5" fill="#3ea2e4"/><rect x="2282" y="442.0" width="16" height="2.5" fill="#4ec9b0"/><rect x="2298" y="442.0" width="2" height="2.5" fill="#d4d4d4"/><rect x="2300" y="442.0" width="2" height="2.5" fill="#d4d4d4"/><rect x="2302" y="442.0" width="36" height="2.5" fill="#4ec9b0"/><rect x="2340" y="442.0" width="10" height="2.5" fill="#9cdcfe"/><rect x="2352" y="442.0" width="2" height="2.5" fill="#d4d4d4"/><rect x="2356" y="442.0" width="30" height="2.5" fill="#4ec9b0"/><rect x="2386" y="442.0" width="2" height="2.5" fill="#d4d4d4"/><rect x="2388" y="442.0" width="2" height="2.5" fill="#d4d4d4"/><rect x="2390" y="442.0" width="38" height="2.5" fill="#dcdcaa"/><rect x="2428" y="442.0" width="2" height="2.5" fill="#d4d4d4"/><rect x="2430" y="442.0" width="2" height="2.5" fill="#d4d4d4"/><rect x="2432" y="442.0" width="2" height="2.5" fill="#d4d4d4"/><rect x="2282" y="446.0" width="2" height="2.5" fill="#d4d4d4"/><rect x="2284" y="446.0" width="8" height="2.5" fill="#569cd6"/><rect x="2292" y="446.0" width="2" height="2.5" fill="#d4d4d4"/><rect x="2294" y="446.0" width="10" height="2.5" fill="#9cdcfe"/><rect x="2304" y="446.0" width="2" height="2.5" fill="#d4d4d4"/><rect x="2274" y="450.0" width="12" height="2.5" fill="#c586c0"/><rect x="2282" y="458.0" width="14" height="2.5" fill="#4ec9b0"/><rect x="2296" y="458.0" width="2" height="2.5" fill="#d4d4d4"/><rect x="2298" y="458.0" width="2" height="2.5" fill="#d4d4d4"/><rect x="2300" y="458.0" width="14" height="2.5" fill="#4ec9b0"/><rect x="2316" y="458.0" width="16" height="2.5" fill="#9cdcfe"/><rect x="2332" y="458.0" width="2" height="2.5" fill="#d4d4d4"/><rect x="2282" y="466.0" width="2" height="2.5" fill="#d4d4d4"/><rect x="2290" y="470.0" width="8" height="2.5" fill="#569cd6"/><rect x="2300" y="470.0" width="10" height="2.5" fill="#569cd6"/><rect x="2312" y="470.0" width="20" height="2.5" fill="#9cdcfe"/><rect x="2334" y="470.0" width="2" height="2.5" fill="#d4d4d4"/><rect x="2338" y="470.0" width="6" height="2.5" fill="#4ec9b0"/><rect x="2344" y="470.0" width="2" height="2.5" fill="#d4d4d4"/><rect x="2346" y="470.0" width="2" height="2.5" fill="#d4d4d4"/><rect x="2348" y="470.0" width="12" height="2.5" fill="#4ec9b0"/><rect x="2360" y="470.0" width="2" height="2.5" fill="#d4d4d4"/><rect x="2362" y="470.0" width="2" height="2.5" fill="#d4d4d4"/><rect x="2364" y="470.0" width="24" height="2.5" fill="#4ec9b0"/><rect x="2388" y="470.0" width="2" height="2.5" fill="#d4d4d4"/><rect x="2390" y="470.0" width="2" height="2.5" fill="#d4d4d4"/><rect x="2392" y="470.0" width="6" height="2.5" fill="#dcdcaa"/><rect x="2398" y="470.0" width="2" height="2.5" fill="#d4d4d4"/><rect x="2400" y="470.0" width="2" height="2.5" fill="#d4d4d4"/><rect x="2402" y="470.0" width="2" height="2.5" fill="#d4d4d4"/><rect x="2290" y="474.0" width="8" height="2.5" fill="#569cd6"/><rect x="2300" y="474.0" width="10" height="2.5" fill="#569cd6"/><rect x="2312" y="474.0" width="16" height="2.5" fill="#9cdcfe"/><rect x="2330" y="474.0" width="2" height="2.5" fill="#d4d4d4"/><rect x="2334" y="474.0" width="14" height="2.5" fill="#4ec9b0"/><rect x="2348" y="474.0" width="2" height="2.5" fill="#d4d4d4"/><rect x="2350" y="474.0" width="2" height="2.5" fill="#d4d4d4"/><rect x="2352" y="474.0" width="20" height="2.5" fill="#dcdcaa"/><rect x="2372" y="474.0" width="2" height="2.5" fill="#d4d4d4"/><rect x="2374" y="474.0" width="20" height="2.5" fill="#9cdcfe"/><rect x="2394" y="474.0" width="2" height="2.5" fill="#d4d4d4"/><rect x="2396" y="474.0" width="2" height="2.5" fill="#d4d4d4"/><rect x="2290" y="478.0" width="8" height="2.5" fill="#dcdcaa"/><rect x="2298" y="478.0" width="2" height="2.5" fill="#d4d4d4"/><rect x="2300" y="478.0" width="8" height="2.5" fill="#ce9178"/><rect x="2310" y="478.0" width="14" height="2.5" fill="#ce9178"/><rect x="2326" y="478.0" width="4" height="2.5" fill="#ce9178"/><rect x="2332" y="478.0" width="12" height="2.5" fill="#ce9178"/><rect x="2344" y="478.0" width="2" height="2.5" fill="#d4d4d4"/><rect x="2348" y="478.0" width="16" height="2.5" fill="#9cdcfe"/><rect x="2364" y="478.0" width="2" height="2.5" fill="#d4d4d4"/><rect x="2366" y="478.0" width="2" height="2.5" fill="#d4d4d4"/><rect x="2282" y="482.0" width="2" height="2.5" fill="#d4d4d4"/><rect x="2282" y="490.0" width="6" height="2.5" fill="#4ec9b0"/><rect x="2288" y="490.0" width="2" height="2.5" fill="#d4d4d4"/><rect x="2290" y="490.0" width="2" height="2.5" fill="#d4d4d4"/><rect x="2292" y="490.0" width="16" height="2.5" fill="#4ec9b0"/><rect x="2308" y="490.0" width="2" height="2.5" fill="#d4d4d4"/><rect x="2310" y="490.0" width="30" height="2.5" fill="#4ec9b0"/><rect x="2340" y="490.0" width="2" height="2.5" fill="#d4d4d4"/><rect x="2342" y="490.0" width="2" height="2.5" fill="#d4d4d4"/><rect x="2344" y="490.0" width="28" height="2.5" fill="#4ec9b0"/><rect x="2372" y="490.0" width="2" height="2.5" fill="#d4d4d4"/><rect x="2376" y="490.0" width="30" height="2.5" fill="#9cdcfe"/><rect x="2406" y="490.0" width="2" height="2.5" fill="#d4d4d4"/><rect x="2290" y="494.0" width="6" height="2.5" fill="#4ec9b0"/><rect x="2296" y="494.0" width="2" height="2.5" fill="#d4d4d4"/><rect x="2298" y="494.0" width="2" height="2.5" fill="#d4d4d4"/><rect x="2300" y="494.0" width="14" height="2.5" fill="#9cdcfe"/><rect x="2314" y="494.0" width="2" height="2.5" fill="#d4d4d4"/><rect x="2316" y="494.0" width="2" height="2.5" fill="#d4d4d4"/><rect x="2282" y="498.0" width="8" height="2.5" fill="#569cd6"/><rect x="2292" y="498.0" width="20" height="2.5" fill="#9cdcfe"/><rect x="2314" y="498.0" width="2" height="2.5" fill="#d4d4d4"/><rect x="2318" y="498.0" width="24" height="2.5" fill="#3ea2e4"/><rect x="2342" y="498.0" width="2" height="2.5" fill="#d4d4d4"/><rect x="2282" y="506.0" width="6" height="2.5" fill="#c586c0"/><rect x="2282" y="510.0" width="2" height="2.5" fill="#d4d4d4"/><rect x="2290" y="514.0" width="20" height="2.5" fill="#4ec9b0"/><rect x="2312" y="514.0" width="20" height="2.5" fill="#dcdcaa"/><rect x="2332" y="514.0" width="2" height="2.5" fill="#d4d4d4"/><rect x="2334" y="514.0" width="8" height="2.5" fill="#9cdcfe"/><rect x="2342" y="514.0" width="2" height="2.5" fill="#d4d4d4"/><rect x="2346" y="514.0" width="8" height="2.5" fill="#9cdcfe"/><rect x="2354" y="514.0" width="2" height="2.5" fill="#d4d4d4"/><rect x="2356" y="514.0" width="2" height="2.5" fill="#d4d4d4"/><rect x="2290" y="518.0" width="16" height="2.5" fill="#9cdcfe"/><rect x="2306" y="518.0" width="2" height="2.5" fill="#d4d4d4"/><rect x="2308" y="518.0" width="10" height="2.5" fill="#dcdcaa"/><rect x="2318" y="518.0" width="2" height="2.5" fill="#d4d4d4"/><rect x="2320" y="518.0" width="2" height="2.5" fill="#d4d4d4"/><rect x="2322" y="518.0" width="2" height="2.5" fill="#d4d4d4"/><rect x="2290" y="522.0" width="20" height="2.5" fill="#9cdcfe"/><rect x="2310" y="522.0" width="2" height="2.5" fill="#d4d4d4"/><rect x="2312" y="522.0" width="48" height="2.5" fill="#dcdcaa"/><rect x="2360" y="522.0" width="2" height="2.5" fill="#d4d4d4"/><rect x="2298" y="526.0" width="6" height="2.5" fill="#4ec9b0"/><rect x="2304" y="526.0" width="2" height="2.5" fill="#d4d4d4"/><rect x="2306" y="526.0" width="2" height="2.5" fill="#d4d4d4"/><rect x="2308" y="526.0" width="8" height="2.5" fill="#dcdcaa"/><rect x="2316" y="526.0" width="2" height="2.5" fill="#d4d4d4"/><rect x="2318" y="526.0" width="14" height="2.5" fill="#9cdcfe"/><rect x="2332" y="526.0" width="2" height="2.5" fill="#d4d4d4"/><rect x="2334" y="526.0" width="14" height="2.5" fill="#9cdcfe"/><rect x="2348" y="526.0" width="2" height="2.5" fill="#d4d4d4"/><rect x="2350" y="526.0" width="2" height="2.5" fill="#d4d4d4"/><rect x="2354" y="526.0" width="6" height="2.5" fill="#4ec9b0"/><rect x="2360" y="526.0" width="2" height="2.5" fill="#d4d4d4"/><rect x="2362" y="526.0" width="2" height="2.5" fill="#d4d4d4"/><rect x="2364" y="526.0" width="8" height="2.5" fill="#dcdcaa"/><rect x="2372" y="526.0" width="2" height="2.5" fill="#d4d4d4"/><rect x="2374" y="526.0" width="14" height="2.5" fill="#9cdcfe"/><rect x="2388" y="526.0" width="2" height="2.5" fill="#d4d4d4"/><rect x="2390" y="526.0" width="40" height="2.5" fill="#9cdcfe"/><rect x="2430" y="526.0" width="2" height="2.5" fill="#d4d4d4"/><rect x="2432" y="526.0" width="2" height="2.5" fill="#d4d4d4"/><rect x="2298" y="530.0" width="14" height="2.5" fill="#9cdcfe"/><rect x="2312" y="530.0" width="2" height="2.5" fill="#d4d4d4"/><rect x="2314" y="530.0" width="42" height="2.5" fill="#9cdcfe"/><rect x="2356" y="530.0" width="2" height="2.5" fill="#d4d4d4"/><rect x="2360" y="530.0" width="6" height="2.5" fill="#4ec9b0"/><rect x="2366" y="530.0" width="2" height="2.5" fill="#d4d4d4"/><rect x="2368" y="530.0" width="2" height="2.5" fill="#d4d4d4"/><rect x="2370" y="530.0" width="8" height="2.5" fill="#dcdcaa"/><rect x="2378" y="530.0" width="2" height="2.5" fill="#d4d4d4"/><rect x="2380" y="530.0" width="14" height="2.5" fill="#9cdcfe"/><rect x="2394" y="530.0" width="2" height="2.5" fill="#d4d4d4"/><rect x="2396" y="530.0" width="28" height="2.5" fill="#9cdcfe"/><rect x="2424" y="530.0" width="2" height="2.5" fill="#d4d4d4"/><rect x="2426" y="530.0" width="2" height="2.5" fill="#d4d4d4"/><rect x="2298" y="534.0" width="14" height="2.5" fill="#9cdcfe"/><rect x="2312" y="534.0" width="2" height="2.5" fill="#d4d4d4"/><rect x="2314" y="534.0" width="16" height="2.5" fill="#9cdcfe"/><rect x="2330" y="534.0" width="2" height="2.5" fill="#d4d4d4"/><rect x="2334" y="534.0" width="6" height="2.5" fill="#4ec9b0"/><rect x="2340" y="534.0" width="2" height="2.5" fill="#d4d4d4"/><rect x="2342" y="534.0" width="2" height="2.5" fill="#d4d4d4"/><rect x="2344" y="534.0" width="8" height="2.5" fill="#dcdcaa"/><rect x="2352" y="534.0" width="2" height="2.5" fill="#d4d4d4"/><rect x="2354" y="534.0" width="14" height="2.5" fill="#9cdcfe"/><rect x="2368" y="534.0" width="2" height="2.5" fill="#d4d4d4"/><rect x="2370" y="534.0" width="12" height="2.5" fill="#9cdcfe"/><rect x="2382" y="534.0" width="2" height="2.5" fill="#d4d4d4"/><rect x="2384" y="534.0" width="2" height="2.5" fill="#d4d4d4"/><rect x="2298" y="538.0" width="6" height="2.5" fill="#4ec9b0"/><rect x="2304" y="538.0" width="2" height="2.5" fill="#d4d4d4"/><rect x="2306" y="538.0" width="2" height="2.5" fill="#d4d4d4"/><rect x="2308" y="538.0" width="8" height="2.5" fill="#dcdcaa"/><rect x="2316" y="538.0" width="2" height="2.5" fill="#d4d4d4"/><rect x="2318" y="538.0" width="14" height="2.5" fill="#9cdcfe"/><rect x="2332" y="538.0" width="2" height="2.5" fill="#d4d4d4"/><rect x="2334" y="538.0" width="16" height="2.5" fill="#9cdcfe"/><rect x="2350" y="538.0" width="2" height="2.5" fill="#d4d4d4"/><rect x="2352" y="538.0" width="2" height="2.5" fill="#d4d4d4"/><rect x="2356" y="538.0" width="14" height="2.5" fill="#9cdcfe"/><rect x="2370" y="538.0" width="2" height="2.5" fill="#d4d4d4"/><rect x="2372" y="538.0" width="18" height="2.5" fill="#9cdcfe"/><rect x="2390" y="538.0" width="2" height="2.5" fill="#d4d4d4"/><rect x="2392" y="538.0" width="2" height="2.5" fill="#d4d4d4"/><rect x="2290" y="542.0" width="8" height="2.5" fill="#569cd6"/><rect x="2300" y="542.0" width="32" height="2.5" fill="#9cdcfe"/><rect x="2334" y="542.0" width="2" height="2.5" fill="#d4d4d4"/><rect x="2338" y="542.0" width="20" height="2.5" fill="#9cdcfe"/><rect x="2358" y="542.0" width="2" height="2.5" fill="#d4d4d4"/><rect x="2360" y="542.0" width="34" height="2.5" fill="#dcdcaa"/><rect x="2394" y="542.0" width="2" height="2.5" fill="#d4d4d4"/><rect x="2396" y="542.0" width="2" height="2.5" fill="#d4d4d4"/><rect x="2398" y="542.0" width="2" height="2.5" fill="#d4d4d4"/><rect x="2290" y="546.0" width="20" height="2.5" fill="#9cdcfe"/><rect x="2310" y="546.0" width="2" height="2.5" fill="#d4d4d4"/><rect x="2312" y="546.0" width="36" height="2.5" fill="#dcdcaa"/><rect x="2348" y="546.0" width="2" height="2.5" fill="#d4d4d4"/><rect x="2350" y="546.0" width="2" height="2.5" fill="#d4d4d4"/><rect x="2352" y="546.0" width="2" height="2.5" fill="#d4d4d4"/><rect x="2290" y="550.0" width="30" height="2.5" fill="#9cdcfe"/><rect x="2322" y="550.0" width="2" height="2.5" fill="#d4d4d4"/><rect x="2326" y="550.0" width="20" height="2.5" fill="#9cdcfe"/><rect x="2346" y="550.0" width="2" height="2.5" fill="#d4d4d4"/><rect x="2348" y="550.0" width="34" height="2.5" fill="#dcdcaa"/><rect x="2382" y="550.0" width="2" height="2.5" fill="#d4d4d4"/><rect x="2384" y="550.0" width="2" height="2.5" fill="#d4d4d4"/><rect x="2386" y="550.0" width="2" height="2.5" fill="#d4d4d4"/><rect x="2290" y="558.0" width="8" height="2.5" fill="#dcdcaa"/><rect x="2298" y="558.0" width="2" height="2.5" fill="#d4d4d4"/><rect x="2300" y="558.0" width="14" height="2.5" fill="#ce9178"/><rect x="2316" y="558.0" width="18" height="2.5" fill="#ce9178"/><rect x="2336" y="558.0" width="8" height="2.5" fill="#ce9178"/><rect x="2346" y="558.0" width="8" height="2.5" fill="#ce9178"/><rect x="2356" y="558.0" width="6" height="2.5" fill="#ce9178"/><rect x="2362" y="558.0" width="2" height="2.5" fill="#d4d4d4"/><rect x="2366" y="558.0" width="16" height="2.5" fill="#9cdcfe"/><rect x="2382" y="558.0" width="2" height="2.5" fill="#d4d4d4"/><rect x="2384" y="558.0" width="14" height="2.5" fill="#dcdcaa"/><rect x="2398" y="558.0" width="2" height="2.5" fill="#d4d4d4"/><rect x="2400" y="558.0" width="2" height="2.5" fill="#d4d4d4"/><rect x="2402" y="558.0" width="2" height="2.5" fill="#d4d4d4"/><rect x="2404" y="558.0" width="2" height="2.5" fill="#d4d4d4"/><rect x="2290" y="562.0" width="20" height="2.5" fill="#9cdcfe"/><rect x="2312" y="562.0" width="2" height="2.5" fill="#d4d4d4"/><rect x="2316" y="562.0" width="32" height="2.5" fill="#9cdcfe"/><rect x="2350" y="562.0" width="2" height="2.5" fill="#d4d4d4"/><rect x="2354" y="562.0" width="24" height="2.5" fill="#3ea2e4"/><rect x="2380" y="562.0" width="2" height="2.5" fill="#d4d4d4"/><rect x="2384" y="562.0" width="24" height="2.5" fill="#3ea2e4"/><rect x="2408" y="562.0" width="2" height="2.5" fill="#d4d4d4"/><rect x="2282" y="566.0" width="2" height="2.5" fill="#d4d4d4"/><rect x="2282" y="570.0" width="10" height="2.5" fill="#c586c0"/><rect x="2294" y="570.0" width="2" height="2.5" fill="#d4d4d4"/><rect x="2296" y="570.0" width="6" height="2.5" fill="#4ec9b0"/><rect x="2302" y="570.0" width="2" height="2.5" fill="#d4d4d4"/><rect x="2304" y="570.0" width="2" height="2.5" fill="#d4d4d4"/><rect x="2306" y="570.0" width="18" height="2.5" fill="#4ec9b0"/><rect x="2324" y="570.0" width="2" height="2.5" fill="#d4d4d4"/><rect x="2328" y="570.0" width="2" height="2.5" fill="#9cdcfe"/><rect x="2330" y="570.0" width="2" height="2.5" fill="#d4d4d4"/><rect x="2282" y="574.0" width="2" height="2.5" fill="#d4d4d4"/><rect x="2290" y="578.0" width="6" height="2.5" fill="#dcdcaa"/><rect x="2296" y="578.0" width="2" height="2.5" fill="#d4d4d4"/><rect x="2298" y="578.0" width="2" height="2.5" fill="#9cdcfe"/><rect x="2300" y="578.0" width="2" height="2.5" fill="#d4d4d4"/><rect x="2302" y="578.0" width="8" height="2.5" fill="#dcdcaa"/><rect x="2310" y="578.0" width="2" height="2.5" fill="#d4d4d4"/><rect x="2312" y="578.0" width="2" height="2.5" fill="#d4d4d4"/><rect x="2314" y="578.0" width="2" height="2.5" fill="#d4d4d4"/><rect x="2316" y="578.0" width="2" height="2.5" fill="#d4d4d4"/><rect x="2290" y="582.0" width="20" height="2.5" fill="#9cdcfe"/><rect x="2312" y="582.0" width="2" height="2.5" fill="#d4d4d4"/><rect x="2316" y="582.0" width="24" height="2.5" fill="#3ea2e4"/><rect x="2340" y="582.0" width="2" height="2.5" fill="#d4d4d4"/><rect x="2282" y="586.0" width="2" height="2.5" fill="#d4d4d4"/><rect x="2282" y="594.0" width="2" height="2.5" fill="#d4d4d4"/><rect x="2290" y="598.0" width="8" height="2.5" fill="#569cd6"/><rect x="2300" y="598.0" width="10" height="2.5" fill="#569cd6"/><rect x="2312" y="598.0" width="16" height="2.5" fill="#9cdcfe"/><rect x="2330" y="598.0" width="2" height="2.5" fill="#d4d4d4"/><rect x="2334" y="598.0" width="6" height="2.5" fill="#4ec9b0"/><rect x="2340" y="598.0" width="2" height="2.5" fill="#d4d4d4"/><rect x="2342" y="598.0" width="2" height="2.5" fill="#d4d4d4"/><rect x="2344" y="598.0" width="12" height="2.5" fill="#4ec9b0"/><rect x="2356" y="598.0" width="2" height="2.5" fill="#d4d4d4"/><rect x="2358" y="598.0" width="2" height="2.5" fill="#d4d4d4"/><rect x="2360" y="598.0" width="24" height="2.5" fill="#4ec9b0"/><rect x="2384" y="598.0" width="2" height="2.5" fill="#d4d4d4"/><rect x="2386" y="598.0" width="2" height="2.5" fill="#d4d4d4"/><rect x="2388" y="598.0" width="6" height="2.5" fill="#dcdcaa"/><rect x="2394" y="598.0" width="2" height="2.5" fill="#d4d4d4"/><rect x="2396" y="598.0" width="2" height="2.5" fill="#d4d4d4"/><rect x="2398" y="598.0" width="2" height="2.5" fill="#d4d4d4"/><rect x="2290" y="602.0" width="8" height="2.5" fill="#569cd6"/><rect x="2300" y="602.0" width="10" height="2.5" fill="#569cd6"/><rect x="2312" y="602.0" width="16" height="2.5" fill="#9cdcfe"/><rect x="2330" y="602.0" width="2" height="2.5" fill="#d4d4d4"/><rect x="2334" y="602.0" width="14" height="2.5" fill="#4ec9b0"/><rect x="2348" y="602.0" width="2" height="2.5" fill="#d4d4d4"/><rect x="2350" y="602.0" width="2" height="2.5" fill="#d4d4d4"/><rect x="2352" y="602.0" width="20" height="2.5" fill="#dcdcaa"/><rect x="2372" y="602.0" width="2" height="2.5" fill="#d4d4d4"/><rect x="2374" y="602.0" width="16" height="2.5" fill="#9cdcfe"/><rect x="2390" y="602.0" width="2" height="2.5" fill="#d4d4d4"/><rect x="2392" y="602.0" width="2" height="2.5" fill="#d4d4d4"/><rect x="2290" y="606.0" width="8" height="2.5" fill="#dcdcaa"/><rect x="2298" y="606.0" width="2" height="2.5" fill="#d4d4d4"/><rect x="2300" y="606.0" width="8" height="2.5" fill="#ce9178"/><rect x="2310" y="606.0" width="20" height="2.5" fill="#ce9178"/><rect x="2332" y="606.0" width="4" height="2.5" fill="#ce9178"/><rect x="2338" y="606.0" width="12" height="2.5" fill="#ce9178"/><rect x="2350" y="606.0" width="2" height="2.5" fill="#d4d4d4"/><rect x="2354" y="606.0" width="16" height="2.5" fill="#9cdcfe"/><rect x="2370" y="606.0" width="2" height="2.5" fill="#d4d4d4"/><rect x="2372" y="606.0" width="2" height="2.5" fill="#d4d4d4"/><rect x="2282" y="610.0" width="2" height="2.5" fill="#d4d4d4"/><rect x="2282" y="618.0" width="4" height="2.5" fill="#c586c0"/><rect x="2288" y="618.0" width="2" height="2.5" fill="#d4d4d4"/><rect x="2290" y="618.0" width="20" height="2.5" fill="#9cdcfe"/><rect x="2312" y="618.0" width="2" height="2.5" fill="#d4d4d4"/><rect x="2314" y="618.0" width="2" height="2.5" fill="#d4d4d4"/><rect x="2318" y="618.0" width="24" height="2.5" fill="#3ea2e4"/><rect x="2342" y="618.0" width="2" height="2.5" fill="#d4d4d4"/><rect x="2282" y="622.0" width="2" height="2.5" fill="#d4d4d4"/><rect x="2290" y="626.0" width="6" height="2.5" fill="#dcdcaa"/><rect x="2296" y="626.0" width="2" height="2.5" fill="#d4d4d4"/><rect x="2298" y="626.0" width="8" height="2.5" fill="#ce9178"/><rect x="2308" y="626.0" width="20" height="2.5" fill="#ce9178"/><rect x="2330" y="626.0" width="8" height="2.5" fill="#ce9178"/><rect x="2340" y="626.0" width="14" height="2.5" fill="#ce9178"/><rect x="2354" y="626.0" width="2" height="2.5" fill="#d4d4d4"/><rect x="2356" y="626.0" width="2" height="2.5" fill="#d4d4d4"/><rect x="2290" y="630.0" width="12" height="2.5" fill="#c586c0"/><rect x="2304" y="630.0" width="24" height="2.5" fill="#3ea2e4"/><rect x="2328" y="630.0" width="2" height="2.5" fill="#d4d4d4"/><rect x="2282" y="634.0" width="2" height="2.5" fill="#d4d4d4"/><rect x="2282" y="642.0" width="4" height="2.5" fill="#c586c0"/><rect x="2288" y="642.0" width="2" height="2.5" fill="#d4d4d4"/><rect x="2290" y="642.0" width="2" height="2.5" fill="#d4d4d4"/><rect x="2292" y="642.0" width="30" height="2.5" fill="#9cdcfe"/><rect x="2322" y="642.0" width="2" height="2.5" fill="#d4d4d4"/><rect x="2282" y="646.0" width="2" height="2.5" fill="#d4d4d4"/><rect x="2290" y="650.0" width="4" height="2.5" fill="#6a9955"/><rect x="2296" y="650.0" width="10" height="2.5" fill="#6a9955"/><rect x="2308" y="650.0" width="6" height="2.5" fill="#6a9955"/><rect x="2316" y="650.0" width="4" height="2.5" fill="#6a9955"/><rect x="2322" y="650.0" width="12" height="2.5" fill="#6a9955"/><rect x="2336" y="650.0" width="4" height="2.5" fill="#6a9955"/><rect x="2342" y="650.0" width="8" height="2.5" fill="#6a9955"/><rect x="2352" y="650.0" width="10" height="2.5" fill="#6a9955"/><rect x="2290" y="654.0" width="12" height="2.5" fill="#c586c0"/><rect x="2304" y="654.0" width="20" height="2.5" fill="#9cdcfe"/><rect x="2324" y="654.0" width="2" height="2.5" fill="#d4d4d4"/><rect x="2282" y="658.0" width="2" height="2.5" fill="#d4d4d4"/><rect x="2282" y="666.0" width="8" height="2.5" fill="#dcdcaa"/><rect x="2290" y="666.0" width="2" height="2.5" fill="#d4d4d4"/><rect x="2292" y="666.0" width="4" height="2.5" fill="#ce9178"/><rect x="2296" y="666.0" width="2" height="2.5" fill="#d4d4d4"/><rect x="2298" y="666.0" width="2" height="2.5" fill="#d4d4d4"/><rect x="2282" y="670.0" width="8" height="2.5" fill="#dcdcaa"/><rect x="2290" y="670.0" width="2" height="2.5" fill="#d4d4d4"/><rect x="2292" y="670.0" width="88" height="2.5" fill="#ce9178"/><rect x="2380" y="670.0" width="2" height="2.5" fill="#d4d4d4"/><rect x="2382" y="670.0" width="2" height="2.5" fill="#d4d4d4"/><rect x="2282" y="674.0" width="8" height="2.5" fill="#dcdcaa"/><rect x="2290" y="674.0" width="2" height="2.5" fill="#d4d4d4"/><rect x="2292" y="674.0" width="4" height="2.5" fill="#ce9178"/><rect x="2298" y="674.0" width="14" height="2.5" fill="#ce9178"/><rect x="2314" y="674.0" width="10" height="2.5" fill="#ce9178"/><rect x="2376" y="674.0" width="4" height="2.5" fill="#ce9178"/><rect x="2380" y="674.0" width="2" height="2.5" fill="#d4d4d4"/><rect x="2382" y="674.0" width="2" height="2.5" fill="#d4d4d4"/><rect x="2282" y="678.0" width="8" height="2.5" fill="#dcdcaa"/><rect x="2290" y="678.0" width="2" height="2.5" fill="#d4d4d4"/><rect x="2292" y="678.0" width="88" height="2.5" fill="#ce9178"/><rect x="2380" y="678.0" width="2" height="2.5" fill="#d4d4d4"/><rect x="2382" y="678.0" width="2" height="2.5" fill="#d4d4d4"/><rect x="2282" y="682.0" width="8" height="2.5" fill="#dcdcaa"/><rect x="2290" y="682.0" width="2" height="2.5" fill="#d4d4d4"/><rect x="2292" y="682.0" width="4" height="2.5" fill="#ce9178"/><rect x="2296" y="682.0" width="2" height="2.5" fill="#d4d4d4"/><rect x="2298" y="682.0" width="2" height="2.5" fill="#d4d4d4"/><rect x="2282" y="686.0" width="4" height="2.5" fill="#c586c0"/><rect x="2288" y="686.0" width="2" height="2.5" fill="#d4d4d4"/><rect x="2290" y="686.0" width="2" height="2.5" fill="#d4d4d4"/><rect x="2292" y="686.0" width="30" height="2.5" fill="#9cdcfe"/><rect x="2322" y="686.0" width="2" height="2.5" fill="#d4d4d4"/><rect x="2324" y="686.0" width="2" height="2.5" fill="#d4d4d4"/><rect x="2326" y="686.0" width="16" height="2.5" fill="#dcdcaa"/><rect x="2342" y="686.0" width="2" height="2.5" fill="#d4d4d4"/><rect x="2344" y="686.0" width="2" height="2.5" fill="#d4d4d4"/><rect x="2346" y="686.0" width="2" height="2.5" fill="#d4d4d4"/><rect x="2282" y="690.0" width="2" height="2.5" fill="#d4d4d4"/><rect x="2290" y="694.0" width="6" height="2.5" fill="#dcdcaa"/><rect x="2296" y="694.0" width="2" height="2.5" fill="#d4d4d4"/><rect x="2298" y="694.0" width="8" height="2.5" fill="#ce9178"/><rect x="2308" y="694.0" width="4" height="2.5" fill="#ce9178"/><rect x="2314" y="694.0" width="6" height="2.5" fill="#ce9178"/><rect x="2322" y="694.0" width="10" height="2.5" fill="#ce9178"/><rect x="2334" y="694.0" width="16" height="2.5" fill="#ce9178"/><rect x="2350" y="694.0" width="2" height="2.5" fill="#d4d4d4"/><rect x="2352" y="694.0" width="2" height="2.5" fill="#d4d4d4"/><rect x="2290" y="698.0" width="12" height="2.5" fill="#c586c0"/><rect x="2304" y="698.0" width="24" height="2.5" fill="#3ea2e4"/><rect x="2328" y="698.0" width="2" height="2.5" fill="#d4d4d4"/><rect x="2282" y="702.0" width="2" height="2.5" fill="#d4d4d4"/><rect x="2282" y="706.0" width="12" height="2.5" fill="#c586c0"/><rect x="2296" y="706.0" width="24" height="2.5" fill="#3ea2e4"/><rect x="2320" y="706.0" width="2" height="2.5" fill="#d4d4d4"/><rect x="2274" y="710.0" width="2" height="2.5" fill="#d4d4d4"/></g></svg><div style="position:absolute;left:10px;width:100px;text-align:center;top:288.00px;height:30px;line-height:30px;font-family:'Liberation Sans', sans-serif;font-size:20px;font-weight:700;color:#ffffff;white-space:pre">5</div>
<div style="position:absolute;left:1401.1px;width:100px;text-align:center;top:1581.30px;height:63px;line-height:63px;font-family:'Liberation Sans', sans-serif;font-size:42px;font-weight:700;color:#ffffff;white-space:pre">2</div>
<div style="position:absolute;left:1707.5px;width:100px;text-align:center;top:1580.30px;height:63px;line-height:63px;font-family:'Liberation Sans', sans-serif;font-size:42px;font-weight:700;color:#ffffff;white-space:pre">4</div>
<div style="position:absolute;left:1846.5px;width:100px;text-align:center;top:1581.30px;height:63px;line-height:63px;font-family:'Liberation Sans', sans-serif;font-size:42px;font-weight:700;color:#ffffff;white-space:pre">3</div></body></html>
